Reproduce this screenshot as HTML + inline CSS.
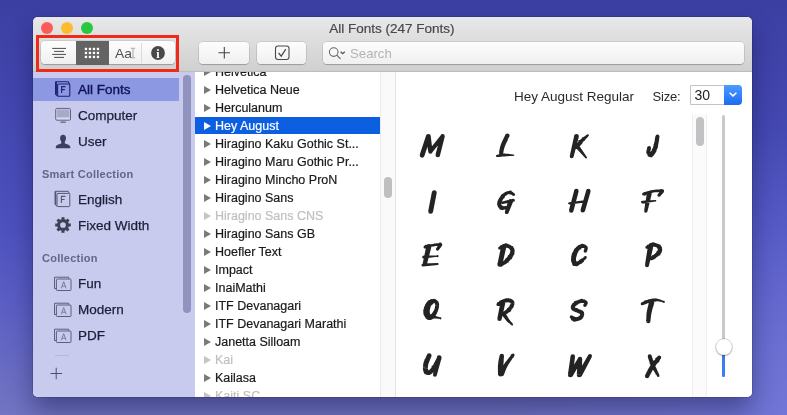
<!DOCTYPE html>
<html><head><meta charset="utf-8">
<style>
html,body{margin:0;padding:0;}
body{width:787px;height:415px;overflow:hidden;position:relative;font-family:"Liberation Sans",sans-serif;
background:radial-gradient(circle at 100% 100%,rgba(112,118,222,.75),rgba(112,118,222,0) 32%),linear-gradient(180deg,#3c3fa2 0%,#4448b1 30%,#4d51be 55%,#5a5dc3 72%,#7275c2 100%);}
#win{will-change:transform;position:absolute;left:33px;top:17px;width:719px;height:380px;border-radius:5px;overflow:hidden;background:#fff;}
#shadow{position:absolute;left:33px;top:17px;width:719px;height:380px;border-radius:5px;box-shadow:0 14px 26px rgba(12,12,60,.42),0 0 0 .5px rgba(0,0,0,.25);}
#tb{position:absolute;left:0;top:0;width:719px;height:54.5px;background:linear-gradient(#e8e8e8,#d0d0d0);border-bottom:1px solid #bcbcbc;box-sizing:border-box;z-index:3;}
.tl{position:absolute;top:5px;width:12px;height:12px;border-radius:50%;}
#title{position:absolute;left:-.7px;width:719px;top:4px;text-align:center;font-size:13.5px;color:#484848;-webkit-text-stroke:.2px #484848;}
.btn{position:absolute;top:25px;height:22px;background:linear-gradient(#fdfdfd,#f0f0f0);border-radius:4px;box-shadow:0 0 0 .5px rgba(0,0,0,.16),0 1px 1px rgba(0,0,0,.2);}
#side{position:absolute;left:0;top:54px;width:162px;height:326px;background:#c8cbed;}
.si{position:absolute;left:45px;font-size:13.5px;color:#1d1f3a;white-space:nowrap;-webkit-text-stroke:.25px #1d1f3a;}
.sh{position:absolute;left:9px;font-size:11px;font-weight:bold;color:#62658d;white-space:nowrap;letter-spacing:.25px;}
#list{position:absolute;left:162px;top:54px;width:185px;height:326px;background:#fff;}
.row{position:absolute;left:0;width:185px;height:18px;font-size:12.5px;line-height:18px;color:#1a1a1a;white-space:nowrap;}
.row span{position:absolute;left:20px;top:-.3px;-webkit-text-stroke:.2px currentColor;}
.row i{position:absolute;left:9px;top:4.700px;width:0;height:0;border-left:7.200px solid #7a7a7a;border-top:4.200px solid transparent;border-bottom:4.200px solid transparent;}
.row.dis{color:#c0c0c0;}
.row.dis i{border-left-color:#c4c4c4;}
.row.sel{background:#0c5fe1;color:#fff;height:17px;}
.row.sel i{border-left-color:#fff;}
#track{position:absolute;left:347px;top:54px;width:14px;height:326px;background:#fafafa;border-left:1px solid #e9e9e9;border-right:1px solid #e2e2e2;}
#prev{position:absolute;left:363px;top:54px;width:356px;height:326px;background:#fff;}
svg{will-change:transform;position:absolute;left:0;top:0;overflow:visible;z-index:5;}
</style></head><body>
<div id="shadow"></div>
<div id="win">
 <div id="tb">
  <div class="tl" style="left:8px;background:#fc5b57;"></div>
  <div class="tl" style="left:28px;background:#fdbc2e;"></div>
  <div class="tl" style="left:48px;background:#28c840;"></div>
  <div id="title">All Fonts (247 Fonts)</div>
  <div class="btn" style="left:8px;width:134px;top:24.300px;height:23.200px;"></div>
  <div style="position:absolute;left:43px;top:24.200px;width:33px;height:23.500px;background:#636363;"></div>
  <div style="position:absolute;left:108px;top:26px;width:1px;height:20px;background:#dadada;"></div>
  <div style="position:absolute;left:3.300px;top:18px;width:142.900px;height:36.800px;border:3.600px solid #ee2a1a;box-sizing:border-box;"></div>
  <div class="btn" style="left:166px;width:50px;"></div>
  <div class="btn" style="left:224px;width:49px;"></div>
  <div class="btn" style="left:290px;width:421px;"></div>
  <div style="position:absolute;left:317px;top:28.5px;font-size:13.200px;color:#b3b3b3;">Search</div>
 </div>
 <div id="side">
  <div style="position:absolute;left:0;top:6.600px;width:146px;height:23px;background:#8c98e2;"></div>
  <div class="si" style="top:11px;color:#12155a;-webkit-text-stroke:.4px #12155a;">All Fonts</div>
  <div class="si" style="top:37px;">Computer</div>
  <div class="si" style="top:63px;">User</div>
  <div class="sh" style="top:97px;">Smart Collection</div>
  <div class="si" style="top:121px;">English</div>
  <div class="si" style="top:147px;">Fixed Width</div>
  <div class="sh" style="top:181px;">Collection</div>
  <div class="si" style="top:205px;">Fun</div>
  <div class="si" style="top:231px;">Modern</div>
  <div class="si" style="top:257px;">PDF</div>
  <div style="position:absolute;left:150.3px;top:3.5px;width:7.4px;height:238px;border-radius:4px;background:#9193bf;"></div>
 </div>
 <div id="list">
  <div class="row" style="top:-8px;"><i></i><span>Helvetica</span></div>
  <div class="row" style="top:10px;"><i></i><span>Helvetica Neue</span></div>
  <div class="row" style="top:28px;"><i></i><span>Herculanum</span></div>
  <div class="row sel" style="top:46px;"><i></i><span>Hey August</span></div>
  <div class="row" style="top:64px;"><i></i><span>Hiragino Kaku Gothic St...</span></div>
  <div class="row" style="top:82px;"><i></i><span>Hiragino Maru Gothic Pr...</span></div>
  <div class="row" style="top:100px;"><i></i><span>Hiragino Mincho ProN</span></div>
  <div class="row" style="top:118px;"><i></i><span>Hiragino Sans</span></div>
  <div class="row dis" style="top:136px;"><i></i><span>Hiragino Sans CNS</span></div>
  <div class="row" style="top:154px;"><i></i><span>Hiragino Sans GB</span></div>
  <div class="row" style="top:172px;"><i></i><span>Hoefler Text</span></div>
  <div class="row" style="top:190px;"><i></i><span>Impact</span></div>
  <div class="row" style="top:208px;"><i></i><span>InaiMathi</span></div>
  <div class="row" style="top:226px;"><i></i><span>ITF Devanagari</span></div>
  <div class="row" style="top:244px;"><i></i><span>ITF Devanagari Marathi</span></div>
  <div class="row" style="top:262px;"><i></i><span>Janetta Silloam</span></div>
  <div class="row dis" style="top:280px;"><i></i><span>Kai</span></div>
  <div class="row" style="top:298px;"><i></i><span>Kailasa</span></div>
  <div class="row dis" style="top:316px;"><i></i><span>Kaiti SC</span></div>
 </div>
 <div id="track"><div style="position:absolute;left:3.200px;top:106px;width:7.800px;height:21px;border-radius:4px;background:#bfbfbf;"></div></div>
 <div id="prev">
  <div style="position:absolute;left:118px;top:18px;font-size:13.5px;color:#2a2a2a;white-space:nowrap;">Hey August Regular</div>
  <div style="position:absolute;left:256.500px;top:18.400px;font-size:13px;letter-spacing:-.2px;color:#2a2a2a;">Size:</div>
  <!-- combo -->
  <div style="position:absolute;left:294px;top:13.500px;width:52px;height:20.500px;box-sizing:border-box;border:1px solid #c4c4c4;border-radius:0 4px 4px 0;background:#fff;"></div>
  <div style="position:absolute;left:328px;top:13.500px;width:18px;height:20.500px;border-radius:0 4px 4px 0;background:linear-gradient(#4d9bff,#1a6cf2);"></div>
  <div style="position:absolute;left:298.500px;top:16px;font-size:14px;color:#222;">30</div>
  <!-- scroll track -->
  <div style="position:absolute;left:296px;top:43px;width:15px;height:283px;background:#fbfbfc;border-left:1px solid #efeff0;border-right:1px solid #efeff0;box-sizing:border-box;"></div>
  <div style="position:absolute;left:300px;top:46px;width:8px;height:29px;border-radius:4px;background:#c2c2c4;"></div>
  <!-- slider -->
  <div style="position:absolute;left:326px;top:44px;width:3px;height:262px;background:#c9c9cc;border-radius:1.5px;"></div>
  <div style="position:absolute;left:326px;top:283px;width:3px;height:23px;background:#3b7cf0;border-radius:1.5px;"></div>
  <div style="position:absolute;left:319.5px;top:267.5px;width:16px;height:16px;border-radius:50%;background:#fff;box-shadow:0 0 0 .5px rgba(0,0,0,.25),0 1px 2px rgba(0,0,0,.3);"></div>
 </div>
</div>
<!-- icons overlay, page coordinates -->
<svg width="787" height="415" viewBox="0 0 787 415" fill="none">
 <!-- list icon -->
 <g stroke="#4d4d4d" stroke-width="1">
  <path d="M52.200 48.400H66M54.100 51.400H64M52.200 54.400H66M54.100 57.400H64"/>
 </g>
 <!-- grid icon -->
 <g fill="#fff">
  <rect x="84.8" y="47.8" width="2.3" height="2.3"/><rect x="88.8" y="47.8" width="2.3" height="2.3"/><rect x="92.8" y="47.8" width="2.3" height="2.3"/><rect x="96.8" y="47.8" width="2.3" height="2.3"/>
  <rect x="84.8" y="51.8" width="2.3" height="2.3"/><rect x="88.8" y="51.8" width="2.3" height="2.3"/><rect x="92.8" y="51.8" width="2.3" height="2.3"/><rect x="96.8" y="51.8" width="2.3" height="2.3"/>
  <rect x="84.8" y="55.8" width="2.3" height="2.3"/><rect x="88.8" y="55.8" width="2.3" height="2.3"/><rect x="92.8" y="55.8" width="2.3" height="2.3"/><rect x="96.8" y="55.8" width="2.3" height="2.3"/>
 </g>
 <!-- AaI -->
 <text x="0" y="0" font-family="Liberation Sans" font-size="12.600" fill="#505050" transform="translate(115,57.800) scale(1.100,1)">Aa</text>
 <path d="M130.800 48.300H135.200M130.800 57.700H135.200M133 48.300V57.700" stroke="#aeaeae" stroke-width="1.100"/>
 <!-- info -->
 <circle cx="158" cy="53" r="6.900" fill="#484848"/>
 <text x="158" y="57.5" font-family="Liberation Serif" font-weight="bold" font-size="12" fill="#fff" text-anchor="middle">i</text>
 <!-- plus -->
 <path d="M218.5 52.7H230M224.3 47V58.5" stroke="#444" stroke-width="1.1"/>
 <!-- check -->
 <rect x="275.5" y="46" width="13.5" height="13.5" rx="2.5" stroke="#4a4a4a" stroke-width="1.1"/>
 <path d="M278.6 53l2.6 3.2l4.6-7" stroke="#4a4a4a" stroke-width="1.2"/>
 <!-- search -->
 <circle cx="333.700" cy="52.100" r="4.300" stroke="#666" stroke-width="1.100"/>
 <path d="M336.800 55.200l3.700 3.700" stroke="#666" stroke-width="1.200"/>
 <path d="M340.600 51.700l2.100 2l2.100-2" stroke="#555" stroke-width="1.300"/>
 <!-- combo chevron -->
 <path d="M729.6 99.2l3.4 3.2l3.4-3.2" stroke="#fff" stroke-width="1.5" transform="translate(0,-6.5)"/>

 <!-- glyphs -->
 <g fill="#232323">
  <path d="M419.7 155.3a2.4 2.4 0 1 0 4.8 0a2.4 2.4 0 1 0 -4.8 0zM424.4 156.1L430.7 137.1L426.1 135.5L419.8 154.5zM426 136.3a2.4 2.4 0 1 0 4.8 0a2.4 2.4 0 1 0 -4.8 0zM426.1 136.3a2.3 2.3 0 1 0 4.6 0a2.3 2.3 0 1 0 -4.6 0zM426.1 136.6L428.2 151.8L432.6 151.2L430.7 136zM428.2 151.5a2.2 2.2 0 1 0 4.4 0a2.2 2.2 0 1 0 -4.4 0zM428.3 151.5a2.1 2.1 0 1 0 4.2 0a2.1 2.1 0 1 0 -4.2 0zM432 152.8L444.2 137.4L441 135L428.8 150.2zM440.6 136.2a2 2 0 1 0 4 0a2 2 0 1 0 -4 0zM440.4 136.2a2.2 2.2 0 1 0 4.4 0a2.2 2.2 0 1 0 -4.4 0zM440.5 135.7L435.6 154.3L440 155.5L444.7 136.7zM435.5 154.9a2.3 2.3 0 1 0 4.6 0a2.3 2.3 0 1 0 -4.6 0z"/>
  <path d="M505.2 135.6a2.2 2.2 0 1 0 4.4 0a2.2 2.2 0 1 0 -4.4 0zM505.4 134.7L504.9 135.8L508.8 137.7L509.4 136.5zM504.7 136.7a2.2 2.2 0 1 0 4.4 0a2.2 2.2 0 1 0 -4.4 0zM504.9 135.8L504.1 137.4L508.1 139.3L508.8 137.7zM503.9 138.3a2.2 2.2 0 1 0 4.4 0a2.2 2.2 0 1 0 -4.4 0zM504.1 137.4L503.2 139.3L507.2 141.2L508.1 139.3zM502.9 140.2a2.2 2.2 0 1 0 4.4 0a2.2 2.2 0 1 0 -4.4 0zM503.2 139.3L502.2 141.3L506.2 143.2L507.2 141.2zM502 142.2a2.2 2.2 0 1 0 4.4 0a2.2 2.2 0 1 0 -4.4 0zM502.2 141.3L501.3 143.3L505.4 145.1L506.3 143.1zM501.2 144.2a2.2 2.2 0 1 0 4.4 0a2.2 2.2 0 1 0 -4.4 0zM501.3 143.4L500.6 145.1L504.8 146.7L505.4 145zM500.5 145.9a2.2 2.2 0 1 0 4.4 0a2.2 2.2 0 1 0 -4.4 0zM500.6 145.3L500.1 146.9L504.3 148.1L504.8 146.5zM500 147.5a2.2 2.2 0 1 0 4.4 0a2.2 2.2 0 1 0 -4.4 0zM500.1 147L499.7 148.6L503.9 149.6L504.3 148zM499.7 149.1a2.1 2.1 0 1 0 4.3 0a2.1 2.1 0 1 0 -4.3 0zM499.7 148.7L499.4 150.3L503.6 151.1L503.9 149.5zM499.4 150.7a2.1 2.1 0 1 0 4.2 0a2.1 2.1 0 1 0 -4.2 0zM499.4 150.3L499.2 151.8L503.3 152.5L503.6 151.1zM499.2 152.1a2.1 2.1 0 1 0 4.1 0a2.1 2.1 0 1 0 -4.1 0zM499.2 151.8L499.1 153L503.1 153.6L503.3 152.5zM499 153.3a2 2 0 1 0 4 0a2 2 0 1 0 -4 0zM499.1 153L498.9 153.8L502.9 154.6L503.1 153.7zM498.9 154.2a2 2 0 1 0 4 0a2 2 0 1 0 -4 0zM496 155.9a1.2 1.2 0 1 0 2.4 0a1.2 1.2 0 1 0 -2.4 0zM497.4 157.1L498.1 157L497.8 154.6L497 154.7zM496.7 155.8a1.2 1.2 0 1 0 2.5 0a1.2 1.2 0 1 0 -2.5 0zM498.2 157L499.2 156.9L498.8 154.4L497.8 154.6zM497.7 155.6a1.3 1.3 0 1 0 2.6 0a1.3 1.3 0 1 0 -2.6 0zM499.2 156.9L500.5 156.8L500.1 154.1L498.8 154.4zM498.9 155.4a1.3 1.3 0 1 0 2.7 0a1.3 1.3 0 1 0 -2.7 0zM500.5 156.8L501.8 156.6L501.5 153.9L500.1 154.1zM500.3 155.3a1.4 1.4 0 1 0 2.8 0a1.4 1.4 0 1 0 -2.8 0zM501.8 156.6L503.2 156.5L502.9 153.7L501.5 153.9zM501.7 155.1a1.4 1.4 0 1 0 2.8 0a1.4 1.4 0 1 0 -2.8 0zM503.2 156.5L504.6 156.4L504.4 153.6L503 153.7zM503.1 155a1.4 1.4 0 1 0 2.8 0a1.4 1.4 0 1 0 -2.8 0zM504.5 156.4L506.1 156.3L506 153.7L504.5 153.6zM504.7 155a1.3 1.3 0 1 0 2.6 0a1.3 1.3 0 1 0 -2.6 0zM506 156.3L507.8 156.2L507.8 153.8L506 153.7zM506.6 155a1.2 1.2 0 1 0 2.4 0a1.2 1.2 0 1 0 -2.4 0zM507.7 156.2L509.5 156.1L509.6 154L507.8 153.8zM508.5 155a1 1 0 1 0 2 0a1 1 0 1 0 -2 0zM509.5 156.1L511.2 156L511.3 154.3L509.6 154zM510.4 155.1a0.8 0.8 0 1 0 1.7 0a0.8 0.8 0 1 0 -1.7 0zM511.2 156L512.6 155.9L512.7 154.5L511.3 154.3zM512 155.2a0.7 0.7 0 1 0 1.4 0a0.7 0.7 0 1 0 -1.4 0zM512.7 155.9L513.7 155.8L513.7 154.6L512.7 154.5zM513.1 155.2a0.6 0.6 0 1 0 1.2 0a0.6 0.6 0 1 0 -1.2 0z"/>
  <path d="M574.1 136.3a2.4 2.4 0 1 0 4.8 0a2.4 2.4 0 1 0 -4.8 0zM574.2 135.7L569.8 155.7L573.6 156.7L578.8 136.9zM569.7 156.2a2 2 0 1 0 4 0a2 2 0 1 0 -4 0zM586.7 135.3a1.1 1.1 0 1 0 2.2 0a1.1 1.1 0 1 0 -2.2 0zM587.1 134.5L586.3 135.1L587.9 136.8L588.5 136.1zM585.9 136a1.2 1.2 0 1 0 2.4 0a1.2 1.2 0 1 0 -2.4 0zM586.3 135.1L585.2 135.9L586.9 137.9L587.9 136.9zM584.7 136.9a1.3 1.3 0 1 0 2.7 0a1.3 1.3 0 1 0 -2.7 0zM585.2 135.9L583.8 136.8L585.8 139.1L586.9 137.9zM583.3 137.9a1.5 1.5 0 1 0 3 0a1.5 1.5 0 1 0 -3 0zM583.8 136.8L582.4 137.9L584.7 140.3L585.8 139zM581.9 139.1a1.7 1.7 0 1 0 3.3 0a1.7 1.7 0 1 0 -3.3 0zM582.4 137.9L581.1 138.9L583.6 141.5L584.7 140.3zM580.5 140.2a1.8 1.8 0 1 0 3.6 0a1.8 1.8 0 1 0 -3.6 0zM581.1 139L579.9 140L582.7 142.6L583.6 141.5zM579.4 141.3a1.9 1.9 0 1 0 3.8 0a1.9 1.9 0 1 0 -3.8 0zM579.9 140.1L578.9 141.1L581.9 143.6L582.7 142.5zM578.4 142.3a2 2 0 1 0 3.9 0a2 2 0 1 0 -3.9 0zM578.9 141.1L578 142.2L581.1 144.7L581.9 143.6zM577.5 143.5a2 2 0 1 0 4 0a2 2 0 1 0 -4 0zM577.9 142.3L577.1 143.4L580.3 145.8L581.1 144.6zM576.7 144.6a2 2 0 1 0 4 0a2 2 0 1 0 -4 0zM577.1 143.4L576.3 144.4L579.6 146.8L580.3 145.7zM576 145.6a2 2 0 1 0 4 0a2 2 0 1 0 -4 0zM576.3 144.5L575.7 145.3L579 147.6L579.6 146.8zM575.4 146.5a2 2 0 1 0 4 0a2 2 0 1 0 -4 0zM575.7 145.3L575.3 145.9L578.5 148.3L579 147.6zM574.9 147.1a2 2 0 1 0 4 0a2 2 0 1 0 -4 0zM575.8 147.1a2 2 0 1 0 4 0a2 2 0 1 0 -4 0zM576.2 148.3L585.2 158.1L586.8 156.9L579.4 145.9zM585 157.5a1 1 0 1 0 2 0a1 1 0 1 0 -2 0z"/>
  <path d="M655.5 136.4a2 2 0 1 0 4 0a2 2 0 1 0 -4 0zM655.5 136.1L655.3 137.3L659.3 138L659.5 136.7zM655.3 137.7a2 2 0 1 0 4 0a2 2 0 1 0 -4 0zM655.3 137.3L655 139.1L659 139.8L659.3 138zM654.9 139.5a2.1 2.1 0 1 0 4.1 0a2.1 2.1 0 1 0 -4.1 0zM655 139.1L654.6 141.2L658.7 141.9L659 139.8zM654.5 141.6a2.1 2.1 0 1 0 4.2 0a2.1 2.1 0 1 0 -4.2 0zM654.6 141.2L654.1 143.4L658.3 144.2L658.7 142zM654.1 143.8a2.1 2.1 0 1 0 4.3 0a2.1 2.1 0 1 0 -4.3 0zM654.1 143.3L653.7 145.4L657.9 146.3L658.3 144.2zM653.6 145.9a2.2 2.2 0 1 0 4.3 0a2.2 2.2 0 1 0 -4.3 0zM653.7 145.3L653.2 147L657.4 148.2L657.9 146.4zM653.1 147.6a2.2 2.2 0 1 0 4.4 0a2.2 2.2 0 1 0 -4.4 0zM653.2 146.8L652.7 148.3L656.9 149.8L657.4 148.4zM652.5 149.1a2.2 2.2 0 1 0 4.5 0a2.2 2.2 0 1 0 -4.5 0zM652.7 148.2L652.1 149.5L656.2 151.3L656.8 150zM651.9 150.4a2.3 2.3 0 1 0 4.5 0a2.3 2.3 0 1 0 -4.5 0zM652.2 149.4L651.5 150.6L655.5 152.7L656.2 151.5zM651.2 151.7a2.3 2.3 0 1 0 4.6 0a2.3 2.3 0 1 0 -4.6 0zM651.6 150.5L650.9 151.6L654.8 154L655.4 152.9zM650.5 152.8a2.3 2.3 0 1 0 4.6 0a2.3 2.3 0 1 0 -4.6 0zM651 151.4L650.4 152.2L654 155L654.7 154.2zM649.9 153.6a2.3 2.3 0 1 0 4.6 0a2.3 2.3 0 1 0 -4.6 0zM650.6 152L650 152.5L653.2 155.9L653.8 155.3zM649.3 154.2a2.3 2.3 0 1 0 4.6 0a2.3 2.3 0 1 0 -4.6 0zM650.7 152.1L650.1 152.4L651.9 156.5L652.5 156.3zM648.7 154.5a2.3 2.3 0 1 0 4.5 0a2.3 2.3 0 1 0 -4.5 0zM651.1 152.2L650.5 152.2L650.3 156.6L650.9 156.7zM648.2 154.4a2.2 2.2 0 1 0 4.4 0a2.2 2.2 0 1 0 -4.4 0zM651.3 152.4L650.6 152.2L648.9 156.1L649.5 156.5zM647.6 154.2a2.2 2.2 0 1 0 4.3 0a2.2 2.2 0 1 0 -4.3 0zM651.1 152.4L650.5 152.1L648 155.4L648.5 155.9zM647.1 153.7a2.1 2.1 0 1 0 4.2 0a2.1 2.1 0 1 0 -4.2 0zM650.8 152.4L650.3 151.9L647.3 154.6L647.7 155.1zM646.8 153.2a2 2 0 1 0 4.1 0a2 2 0 1 0 -4.1 0zM650.6 152.2L650.2 151.7L646.8 153.7L647 154.2zM646.5 152.7a2 2 0 1 0 4 0a2 2 0 1 0 -4 0zM650.5 152.4L650.3 151.7L646.4 152.4L646.5 153zM646.4 152a2 2 0 1 0 3.9 0a2 2 0 1 0 -3.9 0zM650.4 152.2L650.4 151.3L646.5 151.1L646.4 151.9zM646.5 151.2a1.9 1.9 0 1 0 3.9 0a1.9 1.9 0 1 0 -3.9 0zM650.4 151.5L650.5 150.6L646.7 149.9L646.5 150.9zM646.7 150.3a1.9 1.9 0 1 0 3.9 0a1.9 1.9 0 1 0 -3.9 0zM650.5 150.7L650.7 149.7L646.9 148.9L646.7 149.8zM646.9 149.3a1.9 1.9 0 1 0 3.8 0a1.9 1.9 0 1 0 -3.8 0zM650.7 149.8L650.9 149L647.1 148.1L646.9 148.9zM647.1 148.5a1.9 1.9 0 1 0 3.8 0a1.9 1.9 0 1 0 -3.8 0zM650.9 148.9L651 148.4L647.2 147.6L647.1 148.2zM647.2 148a1.9 1.9 0 1 0 3.8 0a1.9 1.9 0 1 0 -3.8 0z"/>
  <path d="M431.9 192.6a2.4 2.4 0 1 0 4.8 0a2.4 2.4 0 1 0 -4.8 0zM431.9 192.1L428.2 210.9L433 211.9L436.7 193.1zM428.2 211.4a2.4 2.4 0 1 0 4.8 0a2.4 2.4 0 1 0 -4.8 0z"/>
  <path d="M512.3 194.6a1.4 1.4 0 1 0 2.8 0a1.4 1.4 0 1 0 -2.8 0zM514.5 193.4L514.1 193.1L512.5 195.5L512.9 195.8zM511.9 194.3a1.4 1.4 0 1 0 2.8 0a1.4 1.4 0 1 0 -2.8 0zM514.1 193.2L513.5 192.7L511.8 195L512.4 195.4zM511.3 193.8a1.4 1.4 0 1 0 2.8 0a1.4 1.4 0 1 0 -2.8 0zM513.5 192.7L512.8 192.2L511.1 194.5L511.8 195zM510.5 193.3a1.4 1.4 0 1 0 2.9 0a1.4 1.4 0 1 0 -2.9 0zM512.7 192.1L511.9 191.6L510.4 194.1L511.2 194.5zM509.7 192.8a1.4 1.4 0 1 0 2.9 0a1.4 1.4 0 1 0 -2.9 0zM511.7 191.5L510.9 191.1L509.8 193.9L510.6 194.2zM508.9 192.5a1.5 1.5 0 1 0 2.9 0a1.5 1.5 0 1 0 -2.9 0zM510.5 191L509.7 190.9L509.3 193.9L510.2 194zM508 192.4a1.5 1.5 0 1 0 3 0a1.5 1.5 0 1 0 -3 0zM509.3 190.9L508.4 191L508.8 194.1L509.7 193.9zM507.1 192.5a1.5 1.5 0 1 0 3.1 0a1.5 1.5 0 1 0 -3.1 0zM508.2 191.1L507.2 191.3L508.1 194.3L509 194zM506.1 192.8a1.6 1.6 0 1 0 3.2 0a1.6 1.6 0 1 0 -3.2 0zM507 191.3L506 191.7L507.2 194.7L508.2 194.3zM505 193.2a1.6 1.6 0 1 0 3.3 0a1.6 1.6 0 1 0 -3.3 0zM505.8 191.8L504.8 192.3L506.4 195.3L507.4 194.7zM503.9 193.8a1.7 1.7 0 1 0 3.4 0a1.7 1.7 0 1 0 -3.4 0zM504.6 192.4L503.6 193L505.6 195.9L506.6 195.2zM502.9 194.5a1.7 1.7 0 1 0 3.5 0a1.7 1.7 0 1 0 -3.5 0zM503.4 193.2L502.5 194L504.9 196.6L505.8 195.8zM501.9 195.3a1.8 1.8 0 1 0 3.6 0a1.8 1.8 0 1 0 -3.6 0zM502.3 194.1L501.4 195.1L504.2 197.6L505.1 196.5zM500.9 196.4a1.9 1.9 0 1 0 3.7 0a1.9 1.9 0 1 0 -3.7 0zM501.3 195.3L500.3 196.5L503.4 198.8L504.3 197.4zM499.9 197.6a1.9 1.9 0 1 0 3.8 0a1.9 1.9 0 1 0 -3.8 0zM500.2 196.6L499.3 198L502.6 200.1L503.5 198.7zM498.9 199.1a2 2 0 1 0 4 0a2 2 0 1 0 -4 0zM499.2 198.1L498.3 199.6L501.9 201.5L502.7 200zM498.1 200.5a2 2 0 1 0 4.1 0a2 2 0 1 0 -4.1 0zM498.3 199.7L497.6 201.1L501.4 202.8L502 201.4zM497.5 201.9a2.1 2.1 0 1 0 4.2 0a2.1 2.1 0 1 0 -4.2 0zM497.5 201.3L497.2 202.5L501.2 203.7L501.5 202.5zM497.1 203.1a2.1 2.1 0 1 0 4.2 0a2.1 2.1 0 1 0 -4.2 0zM497.1 203.1L497.1 204.1L501.3 204.2L501.3 203.1zM497.1 204.1a2.1 2.1 0 1 0 4.2 0a2.1 2.1 0 1 0 -4.2 0zM497.2 204.6L497.4 205.6L501.4 204.6L501.2 203.6zM497.4 205.1a2 2 0 1 0 4.1 0a2 2 0 1 0 -4.1 0zM497.6 206L498.1 206.9L501.6 205.2L501.3 204.2zM497.9 206a2 2 0 1 0 4 0a2 2 0 1 0 -4 0zM498.2 207.2L498.8 207.9L502 205.7L501.5 204.9zM498.5 206.8a1.9 1.9 0 1 0 3.8 0a1.9 1.9 0 1 0 -3.8 0zM499 208.1L499.7 208.7L502.3 206.2L501.8 205.5zM499.2 207.4a1.9 1.9 0 1 0 3.7 0a1.9 1.9 0 1 0 -3.7 0zM499.9 208.9L500.5 209.3L502.7 206.5L502.1 206zM499.8 207.9a1.8 1.8 0 1 0 3.6 0a1.8 1.8 0 1 0 -3.6 0zM501 209.6L501.7 209.8L502.8 206.5L502.2 206.2zM500.5 208.1a1.8 1.8 0 1 0 3.5 0a1.8 1.8 0 1 0 -3.5 0zM502.3 209.9L503.1 209.9L503.1 206.4L502.3 206.4zM501.4 208.1a1.7 1.7 0 1 0 3.4 0a1.7 1.7 0 1 0 -3.4 0zM503.3 209.8L504.2 209.7L503.7 206.3L502.8 206.4zM502.3 208a1.7 1.7 0 1 0 3.4 0a1.7 1.7 0 1 0 -3.4 0zM504.3 209.6L505.2 209.4L504.4 206.2L503.6 206.4zM503.1 207.8a1.6 1.6 0 1 0 3.3 0a1.6 1.6 0 1 0 -3.3 0zM505.2 209.4L505.9 209.2L505.1 206L504.4 206.2zM503.9 207.6a1.6 1.6 0 1 0 3.2 0a1.6 1.6 0 1 0 -3.2 0zM505.8 209.2L506.3 209.1L505.7 205.9L505.2 206zM504.4 207.5a1.6 1.6 0 1 0 3.2 0a1.6 1.6 0 1 0 -3.2 0zM501.3 202.7a1.2 1.2 0 1 0 2.4 0a1.2 1.2 0 1 0 -2.4 0zM502.8 203.9L513.7 201.8L513.1 198.8L502.2 201.5zM511.9 200.3a1.5 1.5 0 1 0 3 0a1.5 1.5 0 1 0 -3 0zM508.2 201.5a2.4 2.4 0 1 0 4.8 0a2.4 2.4 0 1 0 -4.8 0zM508.3 200.7L504.9 211.5L508.5 212.9L512.9 202.3zM504.8 212.2a1.9 1.9 0 1 0 3.8 0a1.9 1.9 0 1 0 -3.8 0z"/>
  <path d="M574.1 191a2.2 2.2 0 1 0 4.5 0a2.2 2.2 0 1 0 -4.5 0zM574.2 190.4L569 210L573.4 211.2L578.6 191.6zM569 210.6a2.2 2.2 0 1 0 4.5 0a2.2 2.2 0 1 0 -4.5 0zM586.1 191a2.2 2.2 0 1 0 4.5 0a2.2 2.2 0 1 0 -4.5 0zM586.2 190.4L580.6 209.7L585 210.9L590.6 191.6zM580.5 210.3a2.2 2.2 0 1 0 4.5 0a2.2 2.2 0 1 0 -4.5 0zM568.1 203.3a1.1 1.1 0 1 0 2.2 0a1.1 1.1 0 1 0 -2.2 0zM569.3 204.4L586.8 202.3L586.6 200.1L569.1 202.2zM585.6 201.2a1.1 1.1 0 1 0 2.2 0a1.1 1.1 0 1 0 -2.2 0z"/>
  <path d="M646.9 193.5a2.4 2.4 0 1 0 4.8 0a2.4 2.4 0 1 0 -4.8 0zM646.9 193L644.1 210.7L647.5 211.3L651.7 194zM644.1 211a1.7 1.7 0 1 0 3.4 0a1.7 1.7 0 1 0 -3.4 0zM642.1 194.1a1.5 1.5 0 1 0 3 0a1.5 1.5 0 1 0 -3 0zM644.1 195.5L645.1 195.2L644.2 192.4L643.1 192.7zM643.2 193.8a1.5 1.5 0 1 0 2.9 0a1.5 1.5 0 1 0 -2.9 0zM645.1 195.1L646.5 194.6L645.6 191.9L644.1 192.4zM644.6 193.3a1.4 1.4 0 1 0 2.9 0a1.4 1.4 0 1 0 -2.9 0zM646.5 194.6L648.2 194L647.3 191.4L645.6 191.9zM646.4 192.7a1.4 1.4 0 1 0 2.8 0a1.4 1.4 0 1 0 -2.8 0zM648.2 194L650 193.4L649.2 190.8L647.3 191.4zM648.2 192.1a1.3 1.3 0 1 0 2.7 0a1.3 1.3 0 1 0 -2.7 0zM649.9 193.4L651.8 192.8L651 190.3L649.2 190.8zM650.1 191.6a1.3 1.3 0 1 0 2.6 0a1.3 1.3 0 1 0 -2.6 0zM651.7 192.9L653.4 192.5L652.8 189.9L651.1 190.3zM651.8 191.2a1.3 1.3 0 1 0 2.6 0a1.3 1.3 0 1 0 -2.6 0zM653.3 192.5L655 192.3L654.6 189.7L652.9 189.9zM653.5 191a1.3 1.3 0 1 0 2.6 0a1.3 1.3 0 1 0 -2.6 0zM654.9 192.3L656.7 192.2L656.5 189.5L654.7 189.7zM655.3 190.9a1.3 1.3 0 1 0 2.7 0a1.3 1.3 0 1 0 -2.7 0zM656.7 192.2L658.5 192.2L658.4 189.4L656.6 189.5zM657.1 190.8a1.4 1.4 0 1 0 2.8 0a1.4 1.4 0 1 0 -2.8 0zM658.5 192.2L660.1 192.2L660.1 189.4L658.4 189.4zM658.7 190.8a1.4 1.4 0 1 0 2.9 0a1.4 1.4 0 1 0 -2.9 0zM660.1 192.2L661.6 192.3L661.6 189.3L660.1 189.4zM660.1 190.8a1.5 1.5 0 1 0 2.9 0a1.5 1.5 0 1 0 -2.9 0zM661.6 192.3L662.6 192.3L662.6 189.3L661.5 189.3zM661.1 190.8a1.5 1.5 0 1 0 3 0a1.5 1.5 0 1 0 -3 0zM660.6 191.4a1.7 1.7 0 1 0 3.4 0a1.7 1.7 0 1 0 -3.4 0zM661 190.3L657.8 194.2L660.2 196.2L663.6 192.5zM657.4 195.2a1.6 1.6 0 1 0 3.2 0a1.6 1.6 0 1 0 -3.2 0zM641 202.1a1.3 1.3 0 1 0 2.6 0a1.3 1.3 0 1 0 -2.6 0zM642.4 203.4L655.7 201.5L655.5 200.1L642.2 200.8zM654.9 200.8a0.7 0.7 0 1 0 1.4 0a0.7 0.7 0 1 0 -1.4 0z"/>
  <path d="M426.2 246.6a2.6 2.6 0 1 0 5.2 0a2.6 2.6 0 1 0 -5.2 0zM426.3 246L422.8 263.1L427 264.1L431.3 247.2zM422.7 263.6a2.2 2.2 0 1 0 4.4 0a2.2 2.2 0 1 0 -4.4 0zM423.5 246.9a1.5 1.5 0 1 0 3 0a1.5 1.5 0 1 0 -3 0zM425.3 248.4L426.4 248.1L425.7 245.2L424.7 245.4zM424.6 246.7a1.5 1.5 0 1 0 2.9 0a1.5 1.5 0 1 0 -2.9 0zM426.4 248.1L427.9 247.7L427.2 244.9L425.7 245.2zM426.1 246.3a1.4 1.4 0 1 0 2.9 0a1.4 1.4 0 1 0 -2.9 0zM427.9 247.7L429.6 247.3L429 244.6L427.2 244.9zM427.9 245.9a1.4 1.4 0 1 0 2.8 0a1.4 1.4 0 1 0 -2.8 0zM429.6 247.3L431.4 246.8L430.9 244.2L429 244.6zM429.8 245.5a1.3 1.3 0 1 0 2.7 0a1.3 1.3 0 1 0 -2.7 0zM431.4 246.8L433.2 246.4L432.6 243.9L430.9 244.2zM431.6 245.2a1.3 1.3 0 1 0 2.6 0a1.3 1.3 0 1 0 -2.6 0zM433.1 246.5L434.6 246.2L434.2 243.6L432.7 243.9zM433.1 244.9a1.3 1.3 0 1 0 2.6 0a1.3 1.3 0 1 0 -2.6 0zM434.6 246.2L435.9 246L435.6 243.4L434.2 243.6zM434.4 244.7a1.3 1.3 0 1 0 2.6 0a1.3 1.3 0 1 0 -2.6 0zM435.8 246L437.1 246L436.9 243.3L435.6 243.4zM435.6 244.6a1.3 1.3 0 1 0 2.7 0a1.3 1.3 0 1 0 -2.7 0zM437.1 246L438.3 246L438.1 243.2L436.9 243.3zM436.8 244.6a1.4 1.4 0 1 0 2.8 0a1.4 1.4 0 1 0 -2.8 0zM438.2 246L439.3 246L439.2 243.1L438.1 243.2zM437.8 244.5a1.4 1.4 0 1 0 2.9 0a1.4 1.4 0 1 0 -2.9 0zM439.3 246L440.2 246L440.1 243.1L439.2 243.1zM438.7 244.5a1.5 1.5 0 1 0 2.9 0a1.5 1.5 0 1 0 -2.9 0zM440.2 246L440.9 246L440.7 243L440.1 243.1zM439.3 244.5a1.5 1.5 0 1 0 3 0a1.5 1.5 0 1 0 -3 0zM438.8 245a1.7 1.7 0 1 0 3.4 0a1.7 1.7 0 1 0 -3.4 0zM439.1 244L436.2 248.2L438.8 250L441.9 246zM435.9 249.1a1.6 1.6 0 1 0 3.2 0a1.6 1.6 0 1 0 -3.2 0zM422.2 257a1.5 1.5 0 1 0 3 0a1.5 1.5 0 1 0 -3 0zM423.8 258.5L437.6 256.8L437.6 255.4L423.6 255.5zM436.9 256.1a0.8 0.8 0 1 0 1.5 0a0.8 0.8 0 1 0 -1.5 0zM421.5 264.9a1.5 1.5 0 1 0 3 0a1.5 1.5 0 1 0 -3 0zM423.1 266.4L437.7 265.1L437.5 263.1L422.9 263.4zM436.6 264.1a1 1 0 1 0 2 0a1 1 0 1 0 -2 0z"/>
  <path d="M500.8 248.2a2.6 2.6 0 1 0 5.2 0a2.6 2.6 0 1 0 -5.2 0zM500.9 247.6L497.5 263.7L502.3 264.7L505.9 248.8zM497.4 264.2a2.5 2.5 0 1 0 5 0a2.5 2.5 0 1 0 -5 0zM498.1 248.1a1.5 1.5 0 1 0 3 0a1.5 1.5 0 1 0 -3 0zM500.3 249.4L501 249.1L499.6 246.4L498.9 246.8zM498.8 247.7a1.5 1.5 0 1 0 3.1 0a1.5 1.5 0 1 0 -3.1 0zM501 249.1L502 248.6L500.5 245.8L499.6 246.4zM499.7 247.2a1.6 1.6 0 1 0 3.1 0a1.6 1.6 0 1 0 -3.1 0zM502 248.6L503.2 248L501.7 245.2L500.5 245.8zM500.8 246.6a1.6 1.6 0 1 0 3.2 0a1.6 1.6 0 1 0 -3.2 0zM503.1 248L504.3 247.5L503 244.5L501.7 245.1zM502 246a1.7 1.7 0 1 0 3.3 0a1.7 1.7 0 1 0 -3.3 0zM504.2 247.6L505.4 247.2L504.3 244L503.1 244.4zM503.2 245.6a1.7 1.7 0 1 0 3.4 0a1.7 1.7 0 1 0 -3.4 0zM505 247.3L506.2 247.2L505.8 243.8L504.7 243.9zM504.2 245.5a1.8 1.8 0 1 0 3.5 0a1.8 1.8 0 1 0 -3.5 0zM505.7 247.2L506.8 247.5L507.4 243.9L506.3 243.8zM505.3 245.7a1.8 1.8 0 1 0 3.6 0a1.8 1.8 0 1 0 -3.6 0zM506.5 247.4L507.7 247.9L508.9 244.4L507.7 244zM506.5 246.1a1.8 1.8 0 1 0 3.7 0a1.8 1.8 0 1 0 -3.7 0zM507.5 247.8L508.7 248.4L510.3 245L509.1 244.5zM507.6 246.7a1.9 1.9 0 1 0 3.8 0a1.9 1.9 0 1 0 -3.8 0zM508.5 248.3L509.5 249L511.6 245.8L510.5 245.1zM508.7 247.4a1.9 1.9 0 1 0 3.8 0a1.9 1.9 0 1 0 -3.8 0zM509.3 248.9L510.2 249.7L512.8 246.7L511.8 246zM509.5 248.2a2 2 0 1 0 3.9 0a2 2 0 1 0 -3.9 0zM509.9 249.4L510.5 250.2L513.7 247.8L513 247zM510.1 249a2 2 0 1 0 4 0a2 2 0 1 0 -4 0zM510.2 249.7L510.5 250.6L514.3 249.1L514 248.3zM510.4 249.8a2 2 0 1 0 4.1 0a2 2 0 1 0 -4.1 0zM510.4 250.1L510.5 251L514.6 250.5L514.5 249.6zM510.5 250.8a2.1 2.1 0 1 0 4.2 0a2.1 2.1 0 1 0 -4.2 0zM510.5 250.6L510.3 251.6L514.6 251.9L514.6 250.9zM510.3 251.8a2.1 2.1 0 1 0 4.3 0a2.1 2.1 0 1 0 -4.3 0zM510.4 251.3L510.1 252.3L514.3 253.3L514.5 252.2zM510.1 252.8a2.2 2.2 0 1 0 4.3 0a2.2 2.2 0 1 0 -4.3 0zM510.2 252.1L509.8 253.1L513.9 254.6L514.3 253.5zM509.7 253.9a2.2 2.2 0 1 0 4.4 0a2.2 2.2 0 1 0 -4.4 0zM509.9 253L509.4 254L513.4 255.8L513.9 254.7zM509.2 254.9a2.2 2.2 0 1 0 4.4 0a2.2 2.2 0 1 0 -4.4 0zM509.5 253.8L508.9 254.9L512.7 257.1L513.3 256zM508.6 256a2.2 2.2 0 1 0 4.4 0a2.2 2.2 0 1 0 -4.4 0zM509 254.7L508.2 255.9L511.7 258.4L512.6 257.3zM507.8 257.1a2.2 2.2 0 1 0 4.3 0a2.2 2.2 0 1 0 -4.3 0zM508.3 255.7L507.3 256.9L510.7 259.6L511.6 258.5zM506.9 258.3a2.1 2.1 0 1 0 4.3 0a2.1 2.1 0 1 0 -4.3 0zM507.4 256.8L506.4 258L509.6 260.8L510.6 259.7zM505.9 259.4a2.1 2.1 0 1 0 4.2 0a2.1 2.1 0 1 0 -4.2 0zM506.5 257.9L505.5 259L508.4 261.9L509.5 260.9zM504.9 260.5a2.1 2.1 0 1 0 4.1 0a2.1 2.1 0 1 0 -4.1 0zM505.5 259L504.6 260L507.4 262.8L508.4 261.9zM504 261.4a2 2 0 1 0 4 0a2 2 0 1 0 -4 0zM504.7 259.9L503.8 260.8L506.3 263.7L507.3 262.9zM503.1 262.2a1.9 1.9 0 1 0 3.9 0a1.9 1.9 0 1 0 -3.9 0zM503.9 260.7L502.9 261.5L505 264.5L506.1 263.8zM502.1 263a1.8 1.8 0 1 0 3.7 0a1.8 1.8 0 1 0 -3.7 0zM502.9 261.5L501.9 262.2L503.8 265.2L504.9 264.5zM501.1 263.7a1.7 1.7 0 1 0 3.5 0a1.7 1.7 0 1 0 -3.5 0zM502 262.2L501 262.9L502.7 265.7L503.8 265.2zM500.2 264.3a1.6 1.6 0 1 0 3.3 0a1.6 1.6 0 1 0 -3.3 0zM501 262.9L500.2 263.5L501.8 266.2L502.7 265.7zM499.5 264.8a1.6 1.6 0 1 0 3.1 0a1.6 1.6 0 1 0 -3.1 0zM500.2 263.5L499.6 263.9L501.2 266.5L501.8 266.1zM498.9 265.2a1.5 1.5 0 1 0 3 0a1.5 1.5 0 1 0 -3 0z"/>
  <path d="M583.6 251.1a1.7 1.7 0 1 0 3.4 0a1.7 1.7 0 1 0 -3.4 0zM586.9 251.6L587.1 251.2L583.8 250.2L583.7 250.6zM583.7 250.7a1.7 1.7 0 1 0 3.4 0a1.7 1.7 0 1 0 -3.4 0zM587 251.3L587.2 250.7L584.1 249.5L583.8 250.1zM584 250.1a1.7 1.7 0 1 0 3.4 0a1.7 1.7 0 1 0 -3.4 0zM587.3 250.6L587.5 250L584.3 248.8L584 249.5zM584.2 249.4a1.7 1.7 0 1 0 3.4 0a1.7 1.7 0 1 0 -3.4 0zM587.5 249.8L587.7 249.1L584.4 248.3L584.2 249zM584.4 248.7a1.7 1.7 0 1 0 3.4 0a1.7 1.7 0 1 0 -3.4 0zM587.8 248.8L587.8 248.2L584.4 247.9L584.4 248.5zM584.4 248a1.7 1.7 0 1 0 3.4 0a1.7 1.7 0 1 0 -3.4 0zM587.8 247.6L587.6 247.1L584.4 247.9L584.5 248.4zM584.3 247.5a1.7 1.7 0 1 0 3.4 0a1.7 1.7 0 1 0 -3.4 0zM587.3 246.4L587 246L584.3 248.1L584.7 248.6zM583.9 247.1a1.7 1.7 0 1 0 3.4 0a1.7 1.7 0 1 0 -3.4 0zM586.7 245.7L586.2 245.3L584 247.9L584.6 248.4zM583.4 246.6a1.7 1.7 0 1 0 3.4 0a1.7 1.7 0 1 0 -3.4 0zM586 245.2L585.3 244.8L583.6 247.7L584.3 248.1zM582.8 246.2a1.7 1.7 0 1 0 3.4 0a1.7 1.7 0 1 0 -3.4 0zM585.1 244.7L584.3 244.4L583.1 247.6L583.9 247.8zM582 246a1.7 1.7 0 1 0 3.4 0a1.7 1.7 0 1 0 -3.4 0zM584 244.3L583.3 244.1L582.7 247.5L583.5 247.6zM581.3 245.8a1.7 1.7 0 1 0 3.4 0a1.7 1.7 0 1 0 -3.4 0zM582.8 244.1L582.1 244.2L582.3 247.6L583.1 247.5zM580.5 245.9a1.8 1.8 0 1 0 3.5 0a1.8 1.8 0 1 0 -3.5 0zM581.7 244.2L580.8 244.4L581.9 247.9L582.7 247.6zM579.6 246.2a1.8 1.8 0 1 0 3.6 0a1.8 1.8 0 1 0 -3.6 0zM580.6 244.5L579.7 244.9L581.3 248.3L582.1 247.8zM578.6 246.6a1.9 1.9 0 1 0 3.8 0a1.9 1.9 0 1 0 -3.8 0zM579.5 245L578.5 245.5L580.5 248.8L581.4 248.2zM577.6 247.2a2 2 0 1 0 3.9 0a2 2 0 1 0 -3.9 0zM578.4 245.6L577.4 246.2L579.8 249.5L580.7 248.7zM576.5 247.9a2 2 0 1 0 4.1 0a2 2 0 1 0 -4.1 0zM577.2 246.3L576.2 247.1L579.1 250.2L580 249.4zM575.6 248.7a2.1 2.1 0 1 0 4.3 0a2.1 2.1 0 1 0 -4.3 0zM576.1 247.3L575.2 248.2L578.6 251L579.3 250zM574.7 249.6a2.2 2.2 0 1 0 4.4 0a2.2 2.2 0 1 0 -4.4 0zM575.1 248.4L574.3 249.5L578.1 251.9L578.7 250.8zM573.9 250.7a2.3 2.3 0 1 0 4.5 0a2.3 2.3 0 1 0 -4.5 0zM574.2 249.6L573.4 250.9L577.5 253.1L578.2 251.8zM573.1 252a2.3 2.3 0 1 0 4.7 0a2.3 2.3 0 1 0 -4.7 0zM573.4 251.1L572.6 252.5L577 254.4L577.6 253zM572.4 253.4a2.4 2.4 0 1 0 4.8 0a2.4 2.4 0 1 0 -4.8 0zM572.6 252.6L572 254L576.6 255.8L577.1 254.3zM571.8 254.9a2.5 2.5 0 1 0 4.9 0a2.5 2.5 0 1 0 -4.9 0zM571.9 254.2L571.5 255.6L576.2 257L576.6 255.6zM571.4 256.3a2.5 2.5 0 1 0 5 0a2.5 2.5 0 1 0 -5 0zM571.4 255.8L571.1 257.1L576.1 258.1L576.3 256.8zM571.1 257.6a2.5 2.5 0 1 0 5 0a2.5 2.5 0 1 0 -5 0zM571.1 257.4L571 258.7L576 259L576.1 257.8zM571 258.8a2.5 2.5 0 1 0 5 0a2.5 2.5 0 1 0 -5 0zM571 258.9L571.1 260.2L576 260L576 258.7zM571.1 260.1a2.5 2.5 0 1 0 4.9 0a2.5 2.5 0 1 0 -4.9 0zM571.1 260.5L571.4 261.7L576.1 261L576 259.7zM571.4 261.3a2.4 2.4 0 1 0 4.8 0a2.4 2.4 0 1 0 -4.8 0zM571.4 262L571.8 263L576.3 261.8L576.1 260.7zM571.7 262.4a2.3 2.3 0 1 0 4.7 0a2.3 2.3 0 1 0 -4.7 0zM572 263.4L572.4 264.3L576.5 262.3L576.2 261.4zM572.2 263.3a2.3 2.3 0 1 0 4.5 0a2.3 2.3 0 1 0 -4.5 0zM572.9 264.8L573.4 265.3L576.6 262.3L576.1 261.7zM572.8 263.8a2.2 2.2 0 1 0 4.4 0a2.2 2.2 0 1 0 -4.4 0zM574.5 265.9L575.2 266L576.2 261.9L575.5 261.7zM573.5 264a2.1 2.1 0 1 0 4.3 0a2.1 2.1 0 1 0 -4.3 0zM576 266.1L576.9 265.9L576.2 261.8L575.3 261.9zM574.5 263.8a2.1 2.1 0 1 0 4.1 0a2.1 2.1 0 1 0 -4.1 0zM577.3 265.8L578.2 265.3L576.8 261.6L575.8 261.9zM575.5 263.5a2 2 0 1 0 4 0a2 2 0 1 0 -4 0zM578.4 265.2L579.4 264.7L577.7 261.2L576.6 261.7zM576.6 263a1.9 1.9 0 1 0 3.8 0a1.9 1.9 0 1 0 -3.8 0zM579.5 264.6L580.5 264L578.6 260.8L577.6 261.3zM577.7 262.4a1.8 1.8 0 1 0 3.7 0a1.8 1.8 0 1 0 -3.7 0zM580.5 263.9L581.4 263.3L579.6 260.3L578.6 260.8zM578.8 261.8a1.8 1.8 0 1 0 3.5 0a1.8 1.8 0 1 0 -3.5 0zM581.5 263.2L582.4 262.5L580.5 259.8L579.5 260.4zM579.8 261.1a1.7 1.7 0 1 0 3.3 0a1.7 1.7 0 1 0 -3.3 0zM582.5 262.4L583.4 261.5L581.4 259.1L580.4 259.9zM580.9 260.3a1.6 1.6 0 1 0 3.1 0a1.6 1.6 0 1 0 -3.1 0zM583.5 261.5L584.4 260.5L582.4 258.4L581.4 259.2zM581.9 259.4a1.4 1.4 0 1 0 2.9 0a1.4 1.4 0 1 0 -2.9 0zM584.4 260.5L585.2 259.5L583.4 257.6L582.4 258.4zM582.9 258.6a1.3 1.3 0 1 0 2.7 0a1.3 1.3 0 1 0 -2.7 0zM585.2 259.5L585.9 258.7L584.2 256.9L583.4 257.6zM583.8 257.8a1.3 1.3 0 1 0 2.5 0a1.3 1.3 0 1 0 -2.5 0zM585.9 258.7L586.4 258.2L584.8 256.4L584.2 256.9zM584.4 257.3a1.2 1.2 0 1 0 2.4 0a1.2 1.2 0 1 0 -2.4 0z"/>
  <path d="M647.8 247.4a2.6 2.6 0 1 0 5.2 0a2.6 2.6 0 1 0 -5.2 0zM647.8 246.9L645 264.8L649 265.6L653 247.9zM645 265.2a2 2 0 1 0 4 0a2 2 0 1 0 -4 0zM645.3 247.3a1.5 1.5 0 1 0 3 0a1.5 1.5 0 1 0 -3 0zM647.5 248.6L648.2 248.3L646.8 245.6L646.1 246zM646 246.9a1.5 1.5 0 1 0 3.1 0a1.5 1.5 0 1 0 -3.1 0zM648.3 248.2L649.2 247.7L647.6 245L646.7 245.6zM646.9 246.4a1.6 1.6 0 1 0 3.1 0a1.6 1.6 0 1 0 -3.1 0zM649.2 247.7L650.3 247.1L648.8 244.3L647.7 245zM647.9 245.7a1.6 1.6 0 1 0 3.2 0a1.6 1.6 0 1 0 -3.2 0zM650.3 247.2L651.5 246.6L650 243.6L648.8 244.3zM649.1 245.1a1.7 1.7 0 1 0 3.3 0a1.7 1.7 0 1 0 -3.3 0zM651.3 246.7L652.6 246.3L651.4 243.1L650.2 243.6zM650.3 244.7a1.7 1.7 0 1 0 3.4 0a1.7 1.7 0 1 0 -3.4 0zM652.2 246.4L653.4 246.2L652.8 242.8L651.7 243zM651.4 244.5a1.8 1.8 0 1 0 3.5 0a1.8 1.8 0 1 0 -3.5 0zM652.9 246.2L654.1 246.4L654.4 242.8L653.3 242.8zM652.4 244.6a1.8 1.8 0 1 0 3.6 0a1.8 1.8 0 1 0 -3.6 0zM653.8 246.4L655 246.7L655.9 243.2L654.7 242.9zM653.6 244.9a1.8 1.8 0 1 0 3.7 0a1.8 1.8 0 1 0 -3.7 0zM654.8 246.7L656 247.2L657.4 243.7L656.1 243.2zM654.8 245.4a1.9 1.9 0 1 0 3.8 0a1.9 1.9 0 1 0 -3.8 0zM655.9 247.1L657 247.7L658.7 244.3L657.6 243.7zM655.9 246a1.9 1.9 0 1 0 3.8 0a1.9 1.9 0 1 0 -3.8 0zM656.8 247.6L657.7 248.3L659.9 245L658.9 244.4zM656.9 246.6a2 2 0 1 0 3.9 0a2 2 0 1 0 -3.9 0zM657.5 248.1L658.1 248.7L660.9 245.9L660.2 245.2zM657.5 247.3a2 2 0 1 0 4 0a2 2 0 1 0 -4 0zM657.8 248.3L658.1 249L661.7 247L661.2 246.3zM657.9 248a2 2 0 1 0 4.1 0a2 2 0 1 0 -4.1 0zM657.9 248.5L658 249.3L662.1 248.3L661.9 247.5zM658 248.8a2.1 2.1 0 1 0 4.2 0a2.1 2.1 0 1 0 -4.2 0zM658 248.8L657.9 249.6L662.2 249.6L662.2 248.8zM657.9 249.6a2.1 2.1 0 1 0 4.3 0a2.1 2.1 0 1 0 -4.3 0zM658 249.2L657.8 250.1L662.1 250.9L662.2 250zM657.7 250.5a2.2 2.2 0 1 0 4.4 0a2.2 2.2 0 1 0 -4.4 0zM657.8 249.8L657.5 250.6L661.7 252.1L662 251.2zM657.4 251.4a2.2 2.2 0 1 0 4.4 0a2.2 2.2 0 1 0 -4.4 0zM657.6 250.4L657.2 251.2L661.2 253.2L661.6 252.3zM657 252.2a2.2 2.2 0 1 0 4.4 0a2.2 2.2 0 1 0 -4.4 0zM657.4 250.9L656.9 251.8L660.3 254.3L661 253.5zM656.4 253a2.2 2.2 0 1 0 4.3 0a2.2 2.2 0 1 0 -4.3 0zM657 251.5L656.3 252.4L659.3 255.3L660.2 254.5zM655.7 253.9a2.1 2.1 0 1 0 4.2 0a2.1 2.1 0 1 0 -4.2 0zM656.4 252.3L655.5 253.2L658.2 256.2L659.2 255.4zM654.8 254.7a2 2 0 1 0 4 0a2 2 0 1 0 -4 0zM655.6 253.1L654.6 254L657 257L658.1 256.3zM653.9 255.5a1.9 1.9 0 1 0 3.9 0a1.9 1.9 0 1 0 -3.9 0zM654.6 254L653.7 254.8L656 257.7L657 257.1zM653 256.3a1.8 1.8 0 1 0 3.7 0a1.8 1.8 0 1 0 -3.7 0zM653.7 254.8L652.9 255.5L655.1 258.3L655.9 257.7zM652.2 256.9a1.8 1.8 0 1 0 3.5 0a1.8 1.8 0 1 0 -3.5 0zM653 255.5L652.3 256.1L654.2 258.8L655 258.3zM651.6 257.4a1.7 1.7 0 1 0 3.3 0a1.7 1.7 0 1 0 -3.3 0zM652.4 256L651.7 256.6L653.3 259.2L654.1 258.9zM650.9 257.9a1.6 1.6 0 1 0 3.1 0a1.6 1.6 0 1 0 -3.1 0zM651.7 256.5L651.1 257L652.5 259.6L653.2 259.3zM650.3 258.3a1.5 1.5 0 1 0 2.9 0a1.5 1.5 0 1 0 -2.9 0zM651.1 257L650.5 257.4L651.8 259.9L652.4 259.6zM649.8 258.6a1.4 1.4 0 1 0 2.8 0a1.4 1.4 0 1 0 -2.8 0zM650.5 257.4L650 257.7L651.2 260.1L651.7 259.9zM649.3 258.9a1.3 1.3 0 1 0 2.6 0a1.3 1.3 0 1 0 -2.6 0zM650 257.7L649.6 258L650.8 260.2L651.2 260zM649 259.1a1.2 1.2 0 1 0 2.5 0a1.2 1.2 0 1 0 -2.5 0z"/>
  <path d="M432.1 300.6a1.9 1.9 0 1 0 3.8 0a1.9 1.9 0 1 0 -3.8 0zM433.1 298.9L432.5 299.2L434.4 302.7L434.9 302.3zM431.4 300.9a2 2 0 1 0 4 0a2 2 0 1 0 -4 0zM432.5 299.1L431.7 299.4L433.5 303.2L434.3 302.7zM430.5 301.3a2.1 2.1 0 1 0 4.2 0a2.1 2.1 0 1 0 -4.2 0zM431.6 299.4L430.6 299.8L432.6 303.8L433.5 303.2zM429.3 301.8a2.3 2.3 0 1 0 4.5 0a2.3 2.3 0 1 0 -4.5 0zM430.4 299.9L429.3 300.3L431.8 304.5L432.8 303.8zM428.2 302.4a2.4 2.4 0 1 0 4.9 0a2.4 2.4 0 1 0 -4.9 0zM429.1 300.5L428.1 301.1L431.2 305.2L432.1 304.4zM427.1 303.2a2.6 2.6 0 1 0 5.1 0a2.6 2.6 0 1 0 -5.1 0zM427.7 301.4L426.9 302.2L430.9 305.8L431.6 304.9zM426.2 304a2.7 2.7 0 1 0 5.4 0a2.7 2.7 0 1 0 -5.4 0zM426.6 302.6L425.9 303.6L430.7 306.5L431.2 305.4zM425.5 305a2.8 2.8 0 1 0 5.6 0a2.8 2.8 0 1 0 -5.6 0zM425.7 303.9L425.1 305.1L430.4 307.5L430.8 306.2zM424.8 306.3a2.9 2.9 0 1 0 5.9 0a2.9 2.9 0 1 0 -5.9 0zM425 305.3L424.4 306.6L430.1 308.7L430.5 307.3zM424.2 307.7a3 3 0 1 0 6.1 0a3 3 0 1 0 -6.1 0zM424.3 306.9L423.8 308.2L429.8 309.9L430.2 308.5zM423.7 309.1a3.1 3.1 0 1 0 6.2 0a3.1 3.1 0 1 0 -6.2 0zM423.8 308.5L423.5 309.8L429.7 311L429.9 309.6zM423.4 310.4a3.2 3.2 0 1 0 6.4 0a3.2 3.2 0 1 0 -6.4 0zM423.4 310.2L423.3 311.4L429.7 311.8L429.8 310.6zM423.3 311.6a3.2 3.2 0 1 0 6.4 0a3.2 3.2 0 1 0 -6.4 0zM423.3 311.9L423.4 313L429.8 312.4L429.7 311.3zM423.4 312.7a3.2 3.2 0 1 0 6.3 0a3.2 3.2 0 1 0 -6.3 0zM423.5 313.5L423.9 314.6L429.9 313.2L429.7 312zM423.8 313.9a3.1 3.1 0 1 0 6.2 0a3.1 3.1 0 1 0 -6.2 0zM424 315L424.5 316L430.1 313.9L429.8 312.8zM424.3 315a3 3 0 1 0 6 0a3 3 0 1 0 -6 0zM424.6 316.4L425.2 317.3L430.4 314.6L430 313.6zM424.9 315.9a2.9 2.9 0 1 0 5.8 0a2.9 2.9 0 1 0 -5.8 0zM425.4 317.6L426.1 318.3L430.6 315.1L430.1 314.2zM425.5 316.7a2.8 2.8 0 1 0 5.6 0a2.8 2.8 0 1 0 -5.6 0zM426.5 318.8L427.1 319.2L430.7 315.2L430.2 314.6zM426.2 317.2a2.7 2.7 0 1 0 5.4 0a2.7 2.7 0 1 0 -5.4 0zM428 319.8L428.7 319.9L430.4 314.9L429.8 314.6zM426.9 317.4a2.6 2.6 0 1 0 5.2 0a2.6 2.6 0 1 0 -5.2 0zM429.6 320L430.3 319.9L430.1 314.9L429.4 314.8zM427.7 317.4a2.5 2.5 0 1 0 5 0a2.5 2.5 0 1 0 -5 0zM430.9 319.8L431.6 319.5L430.2 314.8L429.5 315zM428.5 317.2a2.4 2.4 0 1 0 4.9 0a2.4 2.4 0 1 0 -4.9 0zM432.1 319.3L432.8 318.9L430.6 314.7L429.8 315zM429.3 316.8a2.3 2.3 0 1 0 4.7 0a2.3 2.3 0 1 0 -4.7 0zM433.1 318.7L433.8 318.1L431.1 314.4L430.3 314.9zM430.2 316.2a2.3 2.3 0 1 0 4.5 0a2.3 2.3 0 1 0 -4.5 0zM434 317.9L434.6 317.2L431.6 314L430.9 314.6zM430.9 315.6a2.2 2.2 0 1 0 4.4 0a2.2 2.2 0 1 0 -4.4 0zM434.8 317L435.4 316.1L432.1 313.5L431.4 314.2zM431.6 314.8a2.1 2.1 0 1 0 4.3 0a2.1 2.1 0 1 0 -4.3 0zM435.6 315.9L436.2 314.8L432.6 312.6L431.9 313.6zM432.3 313.7a2.1 2.1 0 1 0 4.2 0a2.1 2.1 0 1 0 -4.2 0zM436.2 314.7L436.8 313.5L433.2 311.6L432.6 312.8zM433 312.6a2 2 0 1 0 4.1 0a2 2 0 1 0 -4.1 0zM436.9 313.4L437.4 312.2L433.8 310.5L433.2 311.7zM433.6 311.3a2 2 0 1 0 4 0a2 2 0 1 0 -4 0zM437.5 312.1L437.9 310.9L434.3 309.4L433.8 310.6zM434.1 310.1a2 2 0 1 0 4 0a2 2 0 1 0 -4 0zM438 310.8L438.3 309.6L434.7 308.4L434.2 309.4zM434.6 309a1.9 1.9 0 1 0 3.9 0a1.9 1.9 0 1 0 -3.9 0zM438.4 309.5L438.6 308.5L434.9 307.4L434.6 308.5zM434.9 308a1.9 1.9 0 1 0 3.9 0a1.9 1.9 0 1 0 -3.9 0zM438.7 308.4L438.9 307.3L435.1 306.5L434.9 307.6zM435.1 306.9a1.9 1.9 0 1 0 3.8 0a1.9 1.9 0 1 0 -3.8 0zM438.9 307.2L439 306.2L435.3 305.6L435.1 306.7zM435.2 305.9a1.9 1.9 0 1 0 3.8 0a1.9 1.9 0 1 0 -3.8 0zM439.1 306L439.1 305L435.3 304.8L435.2 305.8zM435.3 304.9a1.9 1.9 0 1 0 3.8 0a1.9 1.9 0 1 0 -3.8 0zM439.1 304.8L439.1 304L435.3 304.2L435.3 305zM435.2 304.1a1.9 1.9 0 1 0 3.8 0a1.9 1.9 0 1 0 -3.8 0zM439 303.7L438.9 302.9L435.1 303.7L435.3 304.4zM435.1 303.3a1.9 1.9 0 1 0 3.8 0a1.9 1.9 0 1 0 -3.8 0zM438.7 302.4L438.4 301.8L435 303.5L435.3 304.2zM434.8 302.6a1.9 1.9 0 1 0 3.8 0a1.9 1.9 0 1 0 -3.8 0zM438.1 301.4L437.5 300.8L434.7 303.4L435.3 303.9zM434.3 302.1a1.9 1.9 0 1 0 3.8 0a1.9 1.9 0 1 0 -3.8 0zM437.3 300.6L436.7 300.1L434.4 303.1L435 303.6zM433.6 301.6a1.9 1.9 0 1 0 3.8 0a1.9 1.9 0 1 0 -3.8 0zM436.6 300L435.9 299.6L433.9 302.8L434.5 303.2zM433 301.2a1.9 1.9 0 1 0 3.8 0a1.9 1.9 0 1 0 -3.8 0zM435.9 299.6L435.4 299.2L433.4 302.5L433.9 302.8zM432.5 300.9a1.9 1.9 0 1 0 3.8 0a1.9 1.9 0 1 0 -3.8 0zM435.5 299.3L435.1 299L432.9 302.2L433.3 302.4zM432.1 300.6a1.9 1.9 0 1 0 3.8 0a1.9 1.9 0 1 0 -3.8 0zM430.4 316.6a1.5 1.5 0 1 0 3 0a1.5 1.5 0 1 0 -3 0zM431.6 318.1L440.4 319L440.6 317.6L432.2 315.1zM439.8 318.3a0.8 0.8 0 1 0 1.5 0a0.8 0.8 0 1 0 -1.5 0z"/>
  <path d="M500.2 303.4a2.5 2.5 0 1 0 5 0a2.5 2.5 0 1 0 -5 0zM500.3 302.9L497.3 318.4L501.7 319.2L505.1 303.9zM497.3 318.8a2.2 2.2 0 1 0 4.4 0a2.2 2.2 0 1 0 -4.4 0zM496.4 304.4a1.5 1.5 0 1 0 3 0a1.5 1.5 0 1 0 -3 0zM498.7 305.7L499.4 305.3L497.8 302.6L497.1 303.1zM497 304a1.6 1.6 0 1 0 3.1 0a1.6 1.6 0 1 0 -3.1 0zM499.4 305.3L500.5 304.8L498.7 302L497.8 302.7zM497.9 303.4a1.6 1.6 0 1 0 3.3 0a1.6 1.6 0 1 0 -3.3 0zM500.4 304.8L501.7 304.2L499.9 301.2L498.7 302zM499 302.7a1.8 1.8 0 1 0 3.5 0a1.8 1.8 0 1 0 -3.5 0zM501.6 304.2L502.9 303.6L501.1 300.4L499.9 301.2zM500.1 302a1.9 1.9 0 1 0 3.7 0a1.9 1.9 0 1 0 -3.7 0zM502.8 303.6L504.1 303.1L502.3 299.6L501.2 300.3zM501.3 301.3a1.9 1.9 0 1 0 3.9 0a1.9 1.9 0 1 0 -3.9 0zM503.9 303.1L505.1 302.8L503.5 299L502.5 299.5zM502.3 300.9a2 2 0 1 0 4 0a2 2 0 1 0 -4 0zM504.8 302.8L505.9 302.6L504.8 298.7L503.8 299zM503.3 300.6a2 2 0 1 0 4.1 0a2 2 0 1 0 -4.1 0zM505.7 302.6L506.7 302.4L505.9 298.4L504.9 298.6zM504.3 300.4a2 2 0 1 0 4.1 0a2 2 0 1 0 -4.1 0zM506.5 302.4L507.5 302.3L507.1 298.3L506.1 298.4zM505.3 300.3a2 2 0 1 0 4.1 0a2 2 0 1 0 -4.1 0zM507.3 302.3L508.3 302.3L508.2 298.3L507.2 298.3zM506.2 300.3a2 2 0 1 0 4 0a2 2 0 1 0 -4 0zM508.1 302.3L508.9 302.4L509.2 298.4L508.4 298.3zM507.1 300.4a2 2 0 1 0 4 0a2 2 0 1 0 -4 0zM508.7 302.3L509.4 302.5L510.2 298.5L509.4 298.4zM507.8 300.5a2 2 0 1 0 4 0a2 2 0 1 0 -4 0zM509.1 302.4L509.8 302.6L511.1 298.8L510.5 298.6zM508.5 300.7a2 2 0 1 0 4 0a2 2 0 1 0 -4 0zM509.6 302.5L510.2 302.8L512 299.3L511.4 299zM509.1 301.1a2 2 0 1 0 4 0a2 2 0 1 0 -4 0zM509.9 302.7L510.5 303.1L512.8 299.8L512.3 299.4zM509.7 301.5a2 2 0 1 0 4 0a2 2 0 1 0 -4 0zM510.2 302.8L510.6 303.3L513.6 300.6L513.2 300.1zM510.1 302a2 2 0 1 0 4 0a2 2 0 1 0 -4 0zM510.3 302.9L510.6 303.4L514.2 301.6L513.9 301.1zM510.4 302.5a2 2 0 1 0 4 0a2 2 0 1 0 -4 0zM510.4 302.8L510.5 303.5L514.5 302.9L514.4 302.2zM510.5 303.2a2 2 0 1 0 4 0a2 2 0 1 0 -4 0zM510.5 303L510.4 303.8L514.4 304.2L514.5 303.4zM510.4 304a2 2 0 1 0 4 0a2 2 0 1 0 -4 0zM510.5 303.4L510.2 304.4L514.1 305.5L514.3 304.5zM510.1 304.9a2 2 0 1 0 4 0a2 2 0 1 0 -4 0zM510.3 304.2L509.9 305.2L513.6 306.7L514 305.7zM509.7 306a2 2 0 1 0 4 0a2 2 0 1 0 -4 0zM509.9 305L509.4 306.1L513 307.9L513.5 306.9zM509.2 307a2 2 0 1 0 4 0a2 2 0 1 0 -4 0zM509.5 305.9L508.8 307L512.2 309.1L512.9 308.1zM508.5 308a2 2 0 1 0 4 0a2 2 0 1 0 -4 0zM508.9 306.8L508.2 307.8L511.4 310.2L512.1 309.3zM507.8 309a2 2 0 1 0 4 0a2 2 0 1 0 -4 0zM508.4 307.6L507.5 308.5L510.3 311.3L511.2 310.4zM506.9 309.9a2 2 0 1 0 3.9 0a2 2 0 1 0 -3.9 0zM507.6 308.4L506.5 309.4L508.9 312.4L510.1 311.5zM505.7 310.9a1.9 1.9 0 1 0 3.9 0a1.9 1.9 0 1 0 -3.9 0zM506.5 309.4L505.3 310.4L507.5 313.4L508.8 312.5zM504.5 311.9a1.9 1.9 0 1 0 3.8 0a1.9 1.9 0 1 0 -3.8 0zM505.3 310.3L504.1 311.2L506.2 314.2L507.4 313.4zM503.3 312.7a1.8 1.8 0 1 0 3.6 0a1.8 1.8 0 1 0 -3.6 0zM504.1 311.2L503 312L505.1 314.9L506.2 314.2zM502.3 313.5a1.8 1.8 0 1 0 3.6 0a1.8 1.8 0 1 0 -3.6 0zM503 312L502.3 312.6L504.3 315.4L505.1 314.9zM501.6 314a1.8 1.8 0 1 0 3.5 0a1.8 1.8 0 1 0 -3.5 0zM501.7 314.1a2 2 0 1 0 4 0a2 2 0 1 0 -4 0zM502 315.2L502.6 315.9L505.8 313.7L505.4 313zM502.2 314.8a1.9 1.9 0 1 0 3.9 0a1.9 1.9 0 1 0 -3.9 0zM502.6 315.9L503.3 316.9L506.4 314.8L505.8 313.7zM503 315.8a1.9 1.9 0 1 0 3.8 0a1.9 1.9 0 1 0 -3.8 0zM503.3 316.9L504.2 318L507.1 316L506.4 314.8zM503.9 317a1.8 1.8 0 1 0 3.6 0a1.8 1.8 0 1 0 -3.6 0zM504.2 318L505.1 319.2L507.9 317.3L507.1 316zM504.8 318.2a1.7 1.7 0 1 0 3.4 0a1.7 1.7 0 1 0 -3.4 0zM505.1 319.2L506 320.3L508.6 318.5L507.9 317.2zM505.7 319.4a1.6 1.6 0 1 0 3.2 0a1.6 1.6 0 1 0 -3.2 0zM506.1 320.4L506.9 321.3L509.3 319.5L508.6 318.4zM506.6 320.4a1.5 1.5 0 1 0 3 0a1.5 1.5 0 1 0 -3 0zM507 321.4L507.8 322.2L509.9 320.3L509.2 319.4zM507.5 321.2a1.4 1.4 0 1 0 2.8 0a1.4 1.4 0 1 0 -2.8 0zM507.8 322.2L508.7 322.9L510.5 321.2L509.8 320.3zM508.4 322.1a1.2 1.2 0 1 0 2.5 0a1.2 1.2 0 1 0 -2.5 0zM508.7 322.9L509.6 323.6L511.1 322L510.5 321.2zM509.3 322.8a1.1 1.1 0 1 0 2.2 0a1.1 1.1 0 1 0 -2.2 0zM509.6 323.6L510.4 324.1L511.7 322.8L511.1 322zM510.1 323.4a1 1 0 1 0 1.9 0a1 1 0 1 0 -1.9 0zM510.4 324.2L511.1 324.6L512.2 323.4L511.7 322.7zM510.8 324a0.8 0.8 0 1 0 1.7 0a0.8 0.8 0 1 0 -1.7 0zM511.1 324.6L511.6 324.9L512.6 323.9L512.2 323.4zM511.4 324.4a0.8 0.8 0 1 0 1.5 0a0.8 0.8 0 1 0 -1.5 0z"/>
  <path d="M583.2 305.3a1.7 1.7 0 1 0 3.4 0a1.7 1.7 0 1 0 -3.4 0zM586.4 306.1L586.6 305.8L583.6 304.1L583.4 304.5zM583.4 305a1.7 1.7 0 1 0 3.4 0a1.7 1.7 0 1 0 -3.4 0zM586.5 305.9L586.8 305.5L584 303.6L583.7 304zM583.7 304.5a1.7 1.7 0 1 0 3.4 0a1.7 1.7 0 1 0 -3.4 0zM586.8 305.4L587.2 304.9L584.3 303.1L583.9 303.6zM584 304a1.7 1.7 0 1 0 3.4 0a1.7 1.7 0 1 0 -3.4 0zM587.2 304.8L587.5 304.2L584.5 302.7L584.2 303.2zM584.3 303.4a1.7 1.7 0 1 0 3.4 0a1.7 1.7 0 1 0 -3.4 0zM587.6 303.8L587.8 303.3L584.5 302.5L584.3 303zM584.4 302.9a1.7 1.7 0 1 0 3.4 0a1.7 1.7 0 1 0 -3.4 0zM587.8 302.5L587.6 302.1L584.4 302.9L584.5 303.4zM584.3 302.5a1.7 1.7 0 1 0 3.4 0a1.7 1.7 0 1 0 -3.4 0zM587.2 301.3L586.9 300.9L584.4 303.3L584.8 303.7zM583.9 302.1a1.7 1.7 0 1 0 3.4 0a1.7 1.7 0 1 0 -3.4 0zM586.6 300.7L586.1 300.3L584.1 303.1L584.6 303.5zM583.4 301.7a1.7 1.7 0 1 0 3.4 0a1.7 1.7 0 1 0 -3.4 0zM585.9 300.2L585.2 299.8L583.6 302.9L584.3 303.2zM582.7 301.3a1.7 1.7 0 1 0 3.4 0a1.7 1.7 0 1 0 -3.4 0zM585 299.7L584.2 299.4L583 302.7L583.8 303zM581.9 301.1a1.7 1.7 0 1 0 3.4 0a1.7 1.7 0 1 0 -3.4 0zM583.9 299.4L583 299.2L582.4 302.6L583.3 302.7zM581 300.9a1.7 1.7 0 1 0 3.5 0a1.7 1.7 0 1 0 -3.5 0zM582.7 299.2L581.8 299.2L581.8 302.6L582.7 302.6zM580 300.9a1.8 1.8 0 1 0 3.5 0a1.8 1.8 0 1 0 -3.5 0zM581.5 299.2L580.4 299.3L581.1 302.8L582.1 302.6zM579 301.1a1.8 1.8 0 1 0 3.6 0a1.8 1.8 0 1 0 -3.6 0zM580.3 299.4L579.1 299.7L580.1 303.2L581.3 302.8zM577.8 301.4a1.8 1.8 0 1 0 3.7 0a1.8 1.8 0 1 0 -3.7 0zM578.9 299.7L577.7 300.2L579 303.7L580.2 303.2zM576.5 301.9a1.9 1.9 0 1 0 3.8 0a1.9 1.9 0 1 0 -3.8 0zM577.6 300.2L576.3 300.7L577.9 304.2L579.1 303.6zM575.2 302.5a1.9 1.9 0 1 0 3.9 0a1.9 1.9 0 1 0 -3.9 0zM576.2 300.8L575 301.4L576.9 304.8L578 304.2zM574 303.1a2 2 0 1 0 3.9 0a2 2 0 1 0 -3.9 0zM574.9 301.5L574 302L576.2 305.4L577.1 304.7zM573.1 303.7a2 2 0 1 0 4 0a2 2 0 1 0 -4 0zM573.8 302.2L573 302.9L575.7 305.8L576.4 305.2zM572.4 304.4a2 2 0 1 0 4 0a2 2 0 1 0 -4 0zM572.8 303.1L572.2 303.8L575.3 306.4L575.9 305.7zM571.7 305.1a2 2 0 1 0 4 0a2 2 0 1 0 -4 0zM572 304L571.5 304.8L574.9 307L575.4 306.2zM571.2 305.9a2 2 0 1 0 4 0a2 2 0 1 0 -4 0zM571.4 305.1L571 305.9L574.7 307.5L575.1 306.7zM570.9 306.7a2 2 0 1 0 4 0a2 2 0 1 0 -4 0zM570.9 306.3L570.7 307L574.7 307.8L574.8 307.1zM570.7 307.4a2 2 0 1 0 4 0a2 2 0 1 0 -4 0zM570.7 307.7L570.8 308.4L574.8 307.8L574.7 307.2zM570.8 308.1a2 2 0 1 0 4 0a2 2 0 1 0 -4 0zM571.2 309.3L571.6 309.9L574.8 307.4L574.4 306.9zM571.2 308.7a2 2 0 1 0 4 0a2 2 0 1 0 -4 0zM572.1 310.3L572.8 310.8L575.1 307.5L574.3 307zM572 309.1a2 2 0 1 0 4 0a2 2 0 1 0 -4 0zM573.1 311L574 311.4L575.7 307.8L574.8 307.3zM572.9 309.6a2 2 0 1 0 4 0a2 2 0 1 0 -4 0zM574.1 311.4L575.2 311.9L576.7 308.1L575.6 307.7zM573.9 310a2 2 0 1 0 4 0a2 2 0 1 0 -4 0zM575.2 311.9L576.2 312.3L577.7 308.5L576.7 308.1zM574.9 310.4a2 2 0 1 0 4 0a2 2 0 1 0 -4 0zM576.1 312.2L577 312.6L578.6 309L577.8 308.6zM575.8 310.8a2 2 0 1 0 4 0a2 2 0 1 0 -4 0zM577 312.6L577.8 313L579.4 309.4L578.6 309zM576.6 311.2a2 2 0 1 0 4 0a2 2 0 1 0 -4 0zM577.9 313L578.8 313.4L580.2 309.6L579.3 309.3zM577.5 311.5a2 2 0 1 0 4 0a2 2 0 1 0 -4 0zM578.8 313.4L579.6 313.7L581 309.9L580.2 309.6zM578.3 311.8a2 2 0 1 0 4 0a2 2 0 1 0 -4 0zM579.5 313.6L580.2 314L581.8 310.3L581.1 310zM579 312.1a2 2 0 1 0 4 0a2 2 0 1 0 -4 0zM579.9 313.8L580.5 314.2L582.7 310.8L582.1 310.5zM579.6 312.5a2 2 0 1 0 4 0a2 2 0 1 0 -4 0zM580 313.7L580.4 314.2L583.6 311.8L583.2 311.3zM580 313a2 2 0 1 0 4 0a2 2 0 1 0 -4 0zM580.1 313.5L580.2 314.1L584.1 313.1L583.9 312.5zM580.2 313.6a2 2 0 1 0 4 0a2 2 0 1 0 -4 0zM580.2 313.6L580.2 314.4L584.2 314.4L584.2 313.6zM580.2 314.4a2 2 0 1 0 4 0a2 2 0 1 0 -4 0zM580.2 314L580.1 314.9L584 315.6L584.1 314.7zM580 315.2a2 2 0 1 0 4 0a2 2 0 1 0 -4 0zM580.1 314.6L579.8 315.4L583.6 316.7L583.9 315.9zM579.7 316a2 2 0 1 0 4 0a2 2 0 1 0 -4 0zM580 315.1L579.6 315.8L583.1 317.7L583.5 317zM579.3 316.8a2 2 0 1 0 4 0a2 2 0 1 0 -4 0zM579.8 315.5L579.3 316.1L582.3 318.7L582.9 318.1zM578.8 317.4a2 2 0 1 0 4 0a2 2 0 1 0 -4 0zM579.6 315.8L578.9 316.3L581.3 319.5L582 319zM578.1 317.9a2 2 0 1 0 4 0a2 2 0 1 0 -4 0zM579.2 316.1L578.2 316.6L580.1 320.2L581 319.7zM577.1 318.4a2 2 0 1 0 4 0a2 2 0 1 0 -4 0zM578.4 316.5L577.4 316.9L578.9 320.7L579.9 320.3zM576.1 318.8a2 2 0 1 0 4 0a2 2 0 1 0 -4 0zM577.5 316.9L576.4 317.2L577.6 321.1L578.7 320.8zM575 319.1a2 2 0 1 0 4 0a2 2 0 1 0 -4 0zM576.6 317.2L575.6 317.4L576.4 321.3L577.4 321.1zM574 319.3a2 2 0 1 0 4 0a2 2 0 1 0 -4 0zM575.9 317.3L575 317.4L575.2 321.4L576.1 321.4zM573.1 319.4a2 2 0 1 0 4 0a2 2 0 1 0 -4 0zM575.5 317.4L574.8 317.3L573.9 321.1L574.7 321.4zM572.4 319.2a2 2 0 1 0 3.9 0a2 2 0 1 0 -3.9 0zM575.2 317.5L574.5 317.1L572.7 320.5L573.4 321zM571.7 318.8a1.9 1.9 0 1 0 3.8 0a1.9 1.9 0 1 0 -3.8 0zM574.7 317.3L574 316.8L571.8 319.8L572.4 320.4zM571 318.3a1.9 1.9 0 1 0 3.7 0a1.9 1.9 0 1 0 -3.7 0zM574.1 316.9L573.5 316.4L571.1 319.1L571.7 319.7zM570.5 317.8a1.8 1.8 0 1 0 3.6 0a1.8 1.8 0 1 0 -3.6 0zM573.5 316.5L573 316L570.6 318.6L571.1 319.1zM570 317.3a1.7 1.7 0 1 0 3.5 0a1.7 1.7 0 1 0 -3.5 0zM572.9 316L572.5 315.7L570.3 318.3L570.7 318.7zM569.7 317a1.7 1.7 0 1 0 3.4 0a1.7 1.7 0 1 0 -3.4 0z"/>
  <path d="M640.7 303.7a1.5 1.5 0 1 0 3 0a1.5 1.5 0 1 0 -3 0zM642.8 305.1L643.6 304.8L642.4 302L641.6 302.3zM641.5 303.4a1.5 1.5 0 1 0 3 0a1.5 1.5 0 1 0 -3 0zM643.6 304.8L644.7 304.3L643.5 301.5L642.4 302zM642.6 302.9a1.5 1.5 0 1 0 3.1 0a1.5 1.5 0 1 0 -3.1 0zM644.7 304.3L646.1 303.7L644.8 300.9L643.5 301.5zM643.9 302.3a1.6 1.6 0 1 0 3.1 0a1.6 1.6 0 1 0 -3.1 0zM646 303.8L647.5 303.2L646.3 300.3L644.9 300.9zM645.3 301.7a1.6 1.6 0 1 0 3.2 0a1.6 1.6 0 1 0 -3.2 0zM647.4 303.2L648.9 302.7L647.7 299.7L646.3 300.2zM646.7 301.2a1.6 1.6 0 1 0 3.2 0a1.6 1.6 0 1 0 -3.2 0zM648.8 302.7L650.1 302.3L649.1 299.3L647.8 299.7zM648 300.8a1.6 1.6 0 1 0 3.2 0a1.6 1.6 0 1 0 -3.2 0zM650 302.4L651.2 302L650.4 299L649.2 299.2zM649.2 300.5a1.6 1.6 0 1 0 3.2 0a1.6 1.6 0 1 0 -3.2 0zM651.1 302L652.3 301.7L651.7 298.7L650.5 299zM650.4 300.2a1.5 1.5 0 1 0 3.1 0a1.5 1.5 0 1 0 -3.1 0zM652.2 301.8L653.4 301.5L652.9 298.6L651.7 298.7zM651.7 300a1.5 1.5 0 1 0 3 0a1.5 1.5 0 1 0 -3 0zM653.3 301.5L654.5 301.3L654.2 298.5L653 298.6zM652.9 299.9a1.4 1.4 0 1 0 2.9 0a1.4 1.4 0 1 0 -2.9 0zM654.4 301.3L655.6 301.2L655.4 298.5L654.3 298.5zM654.1 299.9a1.4 1.4 0 1 0 2.7 0a1.4 1.4 0 1 0 -2.7 0zM655.5 301.2L656.7 301.2L656.7 298.6L655.6 298.5zM655.4 299.9a1.3 1.3 0 1 0 2.6 0a1.3 1.3 0 1 0 -2.6 0zM656.5 301.2L657.8 301.3L658.2 298.9L656.9 298.6zM656.8 300.1a1.2 1.2 0 1 0 2.4 0a1.2 1.2 0 1 0 -2.4 0zM657.7 301.3L659.1 301.5L659.7 299.3L658.3 298.9zM658.3 300.4a1.1 1.1 0 1 0 2.2 0a1.1 1.1 0 1 0 -2.2 0zM659.1 301.5L660.5 301.8L661.1 299.9L659.7 299.4zM659.8 300.8a1 1 0 1 0 2 0a1 1 0 1 0 -2 0zM660.5 301.8L661.8 302.1L662.4 300.4L661.1 299.9zM661.2 301.3a0.9 0.9 0 1 0 1.8 0a0.9 0.9 0 1 0 -1.8 0zM661.8 302.1L662.9 302.4L663.5 300.9L662.4 300.4zM662.4 301.6a0.8 0.8 0 1 0 1.6 0a0.8 0.8 0 1 0 -1.6 0zM663 302.4L663.8 302.6L664.2 301.2L663.4 300.9zM663.2 301.9a0.8 0.8 0 1 0 1.5 0a0.8 0.8 0 1 0 -1.5 0zM649.1 302.3a2.6 2.6 0 1 0 5.2 0a2.6 2.6 0 1 0 -5.2 0zM649.2 301.6L648.9 302.8L653.9 304.1L654.2 303zM648.8 303.4a2.6 2.6 0 1 0 5.2 0a2.6 2.6 0 1 0 -5.2 0zM648.9 302.8L648.5 304.4L653.4 305.7L653.9 304.1zM648.4 305a2.6 2.6 0 1 0 5.1 0a2.6 2.6 0 1 0 -5.1 0zM648.5 304.4L648 306.3L652.9 307.6L653.4 305.7zM647.9 306.9a2.5 2.5 0 1 0 5 0a2.5 2.5 0 1 0 -5 0zM648 306.3L647.5 308.3L652.3 309.5L652.9 307.5zM647.4 308.9a2.5 2.5 0 1 0 5 0a2.5 2.5 0 1 0 -5 0zM647.5 308.3L647.1 310.3L651.8 311.4L652.3 309.5zM647 310.9a2.4 2.4 0 1 0 4.9 0a2.4 2.4 0 1 0 -4.9 0zM647.1 310.4L646.7 312.1L651.5 313.1L651.9 311.4zM646.7 312.6a2.4 2.4 0 1 0 4.8 0a2.4 2.4 0 1 0 -4.8 0zM646.7 312.2L646.5 313.9L651.2 314.6L651.5 313zM646.5 314.2a2.4 2.4 0 1 0 4.7 0a2.4 2.4 0 1 0 -4.7 0zM646.5 314L646.4 315.7L651 316.2L651.2 314.5zM646.4 315.9a2.3 2.3 0 1 0 4.6 0a2.3 2.3 0 1 0 -4.6 0zM646.4 315.7L646.3 317.4L650.8 317.7L651 316.1zM646.3 317.5a2.2 2.2 0 1 0 4.5 0a2.2 2.2 0 1 0 -4.5 0zM646.3 317.4L646.3 318.9L650.6 319.2L650.8 317.7zM646.3 319a2.2 2.2 0 1 0 4.4 0a2.2 2.2 0 1 0 -4.4 0zM646.3 318.9L646.2 320.2L650.5 320.4L650.6 319.2zM646.2 320.3a2.1 2.1 0 1 0 4.3 0a2.1 2.1 0 1 0 -4.3 0zM646.2 320.1L646.2 321L650.4 321.4L650.5 320.4zM646.2 321.2a2.1 2.1 0 1 0 4.2 0a2.1 2.1 0 1 0 -4.2 0z"/>
  <path d="M426.8 355.7a2.4 2.4 0 1 0 4.8 0a2.4 2.4 0 1 0 -4.8 0zM427 354.7L426.6 355.6L431 357.6L431.4 356.7zM426.4 356.6a2.4 2.4 0 1 0 4.8 0a2.4 2.4 0 1 0 -4.8 0zM426.6 355.6L426 356.9L430.4 358.9L431 357.6zM425.8 357.9a2.4 2.4 0 1 0 4.9 0a2.4 2.4 0 1 0 -4.9 0zM426 356.9L425.3 358.4L429.7 360.5L430.4 358.9zM425.1 359.4a2.4 2.4 0 1 0 4.9 0a2.4 2.4 0 1 0 -4.9 0zM425.2 358.5L424.5 360.1L429.1 362L429.8 360.4zM424.3 361.1a2.5 2.5 0 1 0 4.9 0a2.5 2.5 0 1 0 -4.9 0zM424.5 360.2L423.9 361.7L428.5 363.5L429.1 361.9zM423.7 362.6a2.5 2.5 0 1 0 5 0a2.5 2.5 0 1 0 -5 0zM423.8 361.9L423.4 363.3L428.2 364.7L428.6 363.3zM423.3 364a2.5 2.5 0 1 0 5 0a2.5 2.5 0 1 0 -5 0zM423.3 363.5L423.1 364.8L428 365.7L428.3 364.5zM423.1 365.2a2.5 2.5 0 1 0 5 0a2.5 2.5 0 1 0 -5 0zM423.1 365L422.9 366.2L427.9 366.8L428.1 365.5zM422.9 366.5a2.5 2.5 0 1 0 5 0a2.5 2.5 0 1 0 -5 0zM422.9 366.4L422.9 367.6L427.9 367.8L427.9 366.6zM422.9 367.7a2.5 2.5 0 1 0 5 0a2.5 2.5 0 1 0 -5 0zM422.9 367.8L422.9 368.9L428 368.7L427.9 367.6zM422.9 368.8a2.5 2.5 0 1 0 5 0a2.5 2.5 0 1 0 -5 0zM422.9 369.1L423.1 370.1L428.1 369.4L427.9 368.4zM423.1 369.8a2.5 2.5 0 1 0 5 0a2.5 2.5 0 1 0 -5 0zM423.1 370.4L423.4 371.2L428.2 370L428 369.1zM423.3 370.6a2.5 2.5 0 1 0 5 0a2.5 2.5 0 1 0 -5 0zM423.5 371.7L423.9 372.3L428.4 370.2L428.1 369.5zM423.7 371.3a2.5 2.5 0 1 0 4.9 0a2.5 2.5 0 1 0 -4.9 0zM424.1 372.8L424.6 373.3L428.5 370.4L428.1 369.8zM424.1 371.9a2.4 2.4 0 1 0 4.9 0a2.4 2.4 0 1 0 -4.9 0zM425 373.7L425.5 374.1L428.7 370.6L428.2 370.1zM424.7 372.3a2.4 2.4 0 1 0 4.8 0a2.4 2.4 0 1 0 -4.8 0zM425.9 374.4L426.5 374.7L428.8 370.6L428.2 370.3zM425.3 372.7a2.3 2.3 0 1 0 4.7 0a2.3 2.3 0 1 0 -4.7 0zM427.1 374.9L427.7 375L428.9 370.6L428.3 370.4zM426 372.8a2.3 2.3 0 1 0 4.6 0a2.3 2.3 0 1 0 -4.6 0zM428.4 375.1L429 375L428.8 370.6L428.2 370.5zM426.6 372.8a2.2 2.2 0 1 0 4.5 0a2.2 2.2 0 1 0 -4.5 0zM429.7 374.9L430.3 374.7L428.8 370.5L428.1 370.7zM427.3 372.6a2.2 2.2 0 1 0 4.5 0a2.2 2.2 0 1 0 -4.5 0zM430.7 374.5L431.4 374L429.1 370.3L428.4 370.7zM428 372.1a2.2 2.2 0 1 0 4.4 0a2.2 2.2 0 1 0 -4.4 0zM431.6 373.9L432.3 373.3L429.5 369.8L428.8 370.4zM428.7 371.6a2.2 2.2 0 1 0 4.4 0a2.2 2.2 0 1 0 -4.4 0zM432.5 373.1L433.2 372.4L430.1 369.3L429.4 370zM429.4 370.8a2.2 2.2 0 1 0 4.4 0a2.2 2.2 0 1 0 -4.4 0zM433.3 372.3L434.1 371.5L430.7 368.6L430 369.4zM430.2 370a2.2 2.2 0 1 0 4.4 0a2.2 2.2 0 1 0 -4.4 0zM434.1 371.4L434.8 370.4L431.4 367.8L430.6 368.7zM430.9 369.1a2.2 2.2 0 1 0 4.4 0a2.2 2.2 0 1 0 -4.4 0zM434.9 370.3L435.6 369.2L432 366.8L431.3 367.9zM431.6 368a2.2 2.2 0 1 0 4.3 0a2.2 2.2 0 1 0 -4.3 0zM435.7 369.1L436.4 367.8L432.7 365.7L431.9 366.9zM432.4 366.7a2.1 2.1 0 1 0 4.3 0a2.1 2.1 0 1 0 -4.3 0zM436.4 367.7L437.1 366.3L433.4 364.4L432.7 365.7zM433.2 365.3a2.1 2.1 0 1 0 4.2 0a2.1 2.1 0 1 0 -4.2 0zM437.1 366.2L437.8 364.8L434.1 363L433.4 364.4zM433.9 363.9a2 2 0 1 0 4.1 0a2 2 0 1 0 -4.1 0zM437.8 364.8L438.4 363.5L434.8 361.7L434.1 363zM434.6 362.6a2 2 0 1 0 4 0a2 2 0 1 0 -4 0zM438.4 363.5L439 362.4L435.4 360.6L434.8 361.7zM435.2 361.5a2 2 0 1 0 4 0a2 2 0 1 0 -4 0zM439 362.5L439.5 361.6L435.9 359.6L435.4 360.5zM435.7 360.6a2 2 0 1 0 4 0a2 2 0 1 0 -4 0zM439.5 361.6L439.9 360.8L436.4 358.8L435.9 359.6zM436.1 359.8a2 2 0 1 0 4.1 0a2 2 0 1 0 -4.1 0zM439.9 360.8L440.4 360.1L436.7 358L436.4 358.8zM436.5 359.1a2.1 2.1 0 1 0 4.2 0a2.1 2.1 0 1 0 -4.2 0zM440.4 360.1L440.8 359.5L437 357.4L436.7 358zM436.8 358.5a2.1 2.1 0 1 0 4.3 0a2.1 2.1 0 1 0 -4.3 0zM440.8 359.5L441.1 359.1L437.3 356.9L437 357.4zM437 358a2.2 2.2 0 1 0 4.3 0a2.2 2.2 0 1 0 -4.3 0zM441.1 359.1L441.3 358.7L437.5 356.5L437.3 356.9zM437.2 357.6a2.2 2.2 0 1 0 4.4 0a2.2 2.2 0 1 0 -4.4 0zM437.2 357.6a2.2 2.2 0 1 0 4.4 0a2.2 2.2 0 1 0 -4.4 0zM437.3 357L433 374.2L436.8 375.2L441.5 358.2zM432.9 374.7a2 2 0 1 0 4 0a2 2 0 1 0 -4 0z"/>
  <path d="M499.6 356a2.2 2.2 0 1 0 4.4 0a2.2 2.2 0 1 0 -4.4 0zM499.6 355.7L499.4 356.7L503.9 357.3L504 356.3zM499.4 357a2.3 2.3 0 1 0 4.5 0a2.3 2.3 0 1 0 -4.5 0zM499.4 356.6L499.2 358L503.8 358.6L503.9 357.3zM499.1 358.3a2.3 2.3 0 1 0 4.7 0a2.3 2.3 0 1 0 -4.7 0zM499.1 358L498.8 359.6L503.7 360.2L503.8 358.6zM498.8 359.9a2.5 2.5 0 1 0 4.9 0a2.5 2.5 0 1 0 -4.9 0zM498.8 359.6L498.5 361.3L503.6 361.9L503.7 360.2zM498.5 361.6a2.6 2.6 0 1 0 5.1 0a2.6 2.6 0 1 0 -5.1 0zM498.5 361.3L498.2 363L503.5 363.6L503.6 361.9zM498.2 363.3a2.6 2.6 0 1 0 5.3 0a2.6 2.6 0 1 0 -5.3 0zM498.2 363.1L498 364.7L503.4 365.1L503.5 363.5zM498 364.9a2.7 2.7 0 1 0 5.4 0a2.7 2.7 0 1 0 -5.4 0zM498 364.8L497.9 366.4L503.4 366.6L503.4 365zM497.9 366.5a2.7 2.7 0 1 0 5.5 0a2.7 2.7 0 1 0 -5.5 0zM497.9 366.5L497.9 368.2L503.4 368.2L503.4 366.5zM497.9 368.2a2.7 2.7 0 1 0 5.5 0a2.7 2.7 0 1 0 -5.5 0zM497.9 368.2L497.9 369.9L503.4 369.9L503.4 368.2zM497.9 369.9a2.7 2.7 0 1 0 5.5 0a2.7 2.7 0 1 0 -5.5 0zM497.9 370L497.9 371.5L503.4 371.4L503.4 369.9zM497.9 371.5a2.7 2.7 0 1 0 5.4 0a2.7 2.7 0 1 0 -5.4 0zM497.9 371.5L498 372.9L503.4 372.8L503.4 371.4zM498 372.8a2.7 2.7 0 1 0 5.4 0a2.7 2.7 0 1 0 -5.4 0zM498 372.9L498 373.8L503.4 373.8L503.4 372.8zM498 373.8a2.7 2.7 0 1 0 5.4 0a2.7 2.7 0 1 0 -5.4 0zM499 373.8a2.5 2.5 0 1 0 5 0a2.5 2.5 0 1 0 -5 0zM503.8 374.9L504.2 373.9L499.8 371.8L499.2 372.7zM499.5 372.8a2.4 2.4 0 1 0 4.9 0a2.4 2.4 0 1 0 -4.9 0zM504.2 373.9L504.7 372.5L500.4 370.5L499.7 371.8zM500.2 371.5a2.4 2.4 0 1 0 4.7 0a2.4 2.4 0 1 0 -4.7 0zM504.7 372.5L505.4 370.9L501.2 369L500.4 370.5zM501 370a2.3 2.3 0 1 0 4.6 0a2.3 2.3 0 1 0 -4.6 0zM505.4 371L506.1 369.2L502.2 367.3L501.3 369zM502 368.3a2.2 2.2 0 1 0 4.4 0a2.2 2.2 0 1 0 -4.4 0zM506.1 369.3L506.9 367.5L503.2 365.6L502.2 367.3zM503 366.5a2.1 2.1 0 1 0 4.2 0a2.1 2.1 0 1 0 -4.2 0zM506.9 367.6L507.7 365.9L504.3 363.9L503.2 365.5zM504 364.9a2 2 0 1 0 4 0a2 2 0 1 0 -4 0zM507.7 366L508.7 364.2L505.5 362.1L504.3 363.8zM505.2 363.2a1.9 1.9 0 1 0 3.8 0a1.9 1.9 0 1 0 -3.8 0zM508.7 364.3L509.9 362.3L507 360.3L505.6 362.1zM506.6 361.3a1.8 1.8 0 1 0 3.6 0a1.8 1.8 0 1 0 -3.6 0zM509.9 362.4L511.2 360.4L508.4 358.4L507 360.2zM508.1 359.4a1.7 1.7 0 1 0 3.4 0a1.7 1.7 0 1 0 -3.4 0zM511.2 360.4L512.5 358.6L509.9 356.6L508.5 358.4zM509.5 357.6a1.6 1.6 0 1 0 3.3 0a1.6 1.6 0 1 0 -3.3 0zM512.5 358.6L513.5 357L511.1 355.2L509.9 356.6zM510.7 356.1a1.6 1.6 0 1 0 3.1 0a1.6 1.6 0 1 0 -3.1 0zM513.5 357L514.3 355.9L511.9 354.1L511 355.2zM511.6 355a1.5 1.5 0 1 0 3 0a1.5 1.5 0 1 0 -3 0z"/>
  <path d="M570.5 356.4a2.2 2.2 0 1 0 4.5 0a2.2 2.2 0 1 0 -4.5 0zM570.6 356.1L567.9 374.4L572.9 375L575 356.7zM567.9 374.7a2.5 2.5 0 1 0 5 0a2.5 2.5 0 1 0 -5 0zM568.5 374.7a2.3 2.3 0 1 0 4.6 0a2.3 2.3 0 1 0 -4.6 0zM572.8 375.9L581.9 360.1L578.1 357.9L568.8 373.5zM577.8 359a2.2 2.2 0 1 0 4.4 0a2.2 2.2 0 1 0 -4.4 0zM577.8 359a2.2 2.2 0 1 0 4.4 0a2.2 2.2 0 1 0 -4.4 0zM577.8 358.9L576.8 374.6L581.8 374.8L582.2 359.1zM576.8 374.7a2.5 2.5 0 1 0 5 0a2.5 2.5 0 1 0 -5 0zM577.3 374.7a2.4 2.4 0 1 0 4.8 0a2.4 2.4 0 1 0 -4.8 0zM581.8 375.9L591.8 356.9L588.2 354.9L577.6 373.5zM588 355.9a2 2 0 1 0 4 0a2 2 0 1 0 -4 0z"/>
  <path d="M647.7 356.3a2 2 0 1 0 4 0a2 2 0 1 0 -4 0zM647.8 356.9L648.1 358L652 356.7L651.6 355.7zM648 357.3a2 2 0 1 0 4 0a2 2 0 1 0 -4 0zM648.1 358L648.6 359.4L652.4 358.1L652 356.7zM648.5 358.7a2 2 0 1 0 4.1 0a2 2 0 1 0 -4.1 0zM648.6 359.4L649.1 361.1L653 359.8L652.4 358.1zM649 360.4a2 2 0 1 0 4.1 0a2 2 0 1 0 -4.1 0zM649.1 361.1L649.8 362.9L653.6 361.6L653 359.8zM649.7 362.3a2.1 2.1 0 1 0 4.1 0a2.1 2.1 0 1 0 -4.1 0zM649.8 363L650.5 364.8L654.3 363.4L653.6 361.5zM650.3 364.1a2 2 0 1 0 4.1 0a2 2 0 1 0 -4.1 0zM650.5 364.9L651.3 366.6L654.9 365L654.3 363.3zM651.1 365.8a2 2 0 1 0 4 0a2 2 0 1 0 -4 0zM651.3 366.7L652.2 368.4L655.6 366.7L654.9 364.9zM652 367.5a1.9 1.9 0 1 0 3.8 0a1.9 1.9 0 1 0 -3.8 0zM652.2 368.4L653.3 370.2L656.5 368.6L655.6 366.7zM653.1 369.4a1.8 1.8 0 1 0 3.6 0a1.8 1.8 0 1 0 -3.6 0zM653.3 370.3L654.5 372.1L657.3 370.6L656.5 368.6zM654.3 371.3a1.6 1.6 0 1 0 3.2 0a1.6 1.6 0 1 0 -3.2 0zM654.5 372.1L655.6 373.8L658.2 372.4L657.3 370.6zM655.4 373.1a1.5 1.5 0 1 0 2.9 0a1.5 1.5 0 1 0 -2.9 0zM655.6 373.8L656.5 375.3L658.9 374L658.2 372.4zM656.4 374.6a1.3 1.3 0 1 0 2.7 0a1.3 1.3 0 1 0 -2.7 0zM656.5 375.3L657.2 376.3L659.4 375.1L658.9 374zM657 375.7a1.2 1.2 0 1 0 2.5 0a1.2 1.2 0 1 0 -2.5 0zM657.2 357.6a2 2 0 1 0 4 0a2 2 0 1 0 -4 0zM657.6 356.4L656.8 357.3L660 359.8L660.8 358.8zM656.4 358.6a2 2 0 1 0 4 0a2 2 0 1 0 -4 0zM656.8 357.3L655.7 358.7L658.9 361.2L660 359.9zM655.3 359.9a2.1 2.1 0 1 0 4.1 0a2.1 2.1 0 1 0 -4.1 0zM655.7 358.7L654.4 360.2L657.7 362.9L658.9 361.2zM653.9 361.6a2.1 2.1 0 1 0 4.2 0a2.1 2.1 0 1 0 -4.2 0zM654.4 360.3L653 362L656.3 364.6L657.7 362.9zM652.5 363.3a2.1 2.1 0 1 0 4.3 0a2.1 2.1 0 1 0 -4.3 0zM652.9 362L651.6 363.8L655.1 366.4L656.4 364.6zM651.2 365.1a2.2 2.2 0 1 0 4.4 0a2.2 2.2 0 1 0 -4.4 0zM651.6 363.8L650.4 365.4L654 368L655.1 366.3zM650 366.7a2.2 2.2 0 1 0 4.4 0a2.2 2.2 0 1 0 -4.4 0zM650.3 365.5L649.3 367.2L653.1 369.5L654.1 367.9zM649 368.4a2.2 2.2 0 1 0 4.4 0a2.2 2.2 0 1 0 -4.4 0zM649.3 367.3L648.2 369.1L652.1 371.2L653.1 369.4zM648 370.2a2.2 2.2 0 1 0 4.4 0a2.2 2.2 0 1 0 -4.4 0zM648.2 369.1L647.3 370.9L651.2 373L652.1 371.2zM647 372a2.2 2.2 0 1 0 4.4 0a2.2 2.2 0 1 0 -4.4 0zM647.2 371L646.4 372.6L650.3 374.7L651.2 373zM646.1 373.7a2.2 2.2 0 1 0 4.4 0a2.2 2.2 0 1 0 -4.4 0zM646.4 372.7L645.7 374.1L649.6 376.1L650.3 374.6zM645.4 375.1a2.2 2.2 0 1 0 4.4 0a2.2 2.2 0 1 0 -4.4 0zM645.7 374.1L645.1 375.1L649.1 377.1L649.6 376.1zM644.9 376.1a2.2 2.2 0 1 0 4.4 0a2.2 2.2 0 1 0 -4.4 0z"/>
 </g>
 <!-- endglyphs -->

 <!-- sidebar icons -->
 <!-- All Fonts -->
 <g stroke="#1d2172" stroke-width="1.1" stroke-linejoin="round" fill="none">
  <rect x="57.6" y="84" width="12.200" height="12.300" rx="1"/>
  <path d="M69.500 84L68.200 81.700H55.700V94.300L57.600 96.200" />
  <path d="M56 82V94.300" stroke-width="1.800"/>
  <path d="M61.600 93V86.600H65.500M61.600 89.600H64.800" stroke-width="1.100"/>
 </g>
 <!-- Computer -->
 <rect x="55.700" y="108.400" width="14.800" height="11.800" rx="1.200" fill="#d6d8ee" stroke="#62647f" stroke-width="1"/>
 <rect x="56.700" y="109.400" width="12.800" height="8" fill="#a8abc8"/>
 <path d="M60.300 122.200H65.900" stroke="#62647f" stroke-width="1.200"/>
 <path d="M62 120.500H64.200V122H62z" fill="#8a8ca8"/>
 <!-- User -->
 <path d="M63.100 134.800c1.900 0 2.900 1.500 2.900 3.400c0 1.500-.6 2.800-1.200 3.500v1.300c0 .5 .4 .8 1.500 1.100c2.500 .7 4 1.500 4 3v1.100h-14.500v-1.100c0-1.500 1.500-2.300 4-3c1.100-.3 1.500-.6 1.500-1.100v-1.300c-.6-.7-1.200-2-1.200-3.500c0-1.900 1-3.400 3-3.400z" fill="#3d3f5e"/>
 <!-- English -->
 <g stroke="#55576f" stroke-width="1" stroke-linejoin="round" fill="none">
  <rect x="57" y="193.400" width="12.800" height="13.200" rx="1"/>
  <path d="M69.400 193.400L68.200 191.300H55.200V204.600L57 206.400" />
  <path d="M55.500 191.500V204.600" stroke-width="1.500"/>
  <path d="M61.400 203V196.400H65.400M61.400 199.500H64.600" stroke-width="1.100"/>
 </g>
 <!-- Gear -->
 <g transform="translate(63,225)">
  <circle r="4.400" stroke="#3f4159" stroke-width="3.100" fill="none"/>
  <g fill="#3f4159">
   <rect x="-1.500" y="-7.800" width="3" height="3" />
   <rect x="-1.500" y="-7.800" width="3" height="3" transform="rotate(45)"/>
   <rect x="-1.500" y="-7.800" width="3" height="3" transform="rotate(90)"/>
   <rect x="-1.500" y="-7.800" width="3" height="3" transform="rotate(135)"/>
   <rect x="-1.500" y="-7.800" width="3" height="3" transform="rotate(180)"/>
   <rect x="-1.500" y="-7.800" width="3" height="3" transform="rotate(225)"/>
   <rect x="-1.500" y="-7.800" width="3" height="3" transform="rotate(270)"/>
   <rect x="-1.500" y="-7.800" width="3" height="3" transform="rotate(315)"/>
  </g>
 </g>
 <!-- Collections -->
 <g stroke="#5c5e7a" stroke-width="1" fill="none" stroke-linejoin="round">
  <path d="M56.300 288.500H54.500V277.200H68.700V278.800"/>
  <rect x="56.400" y="279" width="14.600" height="11.500" rx=".8"/>
  <path d="M61.300 288.300L63.700 281.600L66.100 288.300M62.100 286.200H65.300" stroke="#7b7d99" stroke-width="1"/>
 </g>
 <g transform="translate(0,26)" stroke="#5c5e7a" stroke-width="1" fill="none" stroke-linejoin="round">
  <path d="M56.300 288.500H54.500V277.200H68.700V278.800"/>
  <rect x="56.400" y="279" width="14.600" height="11.500" rx=".8"/>
  <path d="M61.300 288.300L63.700 281.600L66.100 288.300M62.100 286.200H65.300" stroke="#7b7d99" stroke-width="1"/>
 </g>
 <g transform="translate(0,52)" stroke="#5c5e7a" stroke-width="1" fill="none" stroke-linejoin="round">
  <path d="M56.300 288.500H54.500V277.200H68.700V278.800"/>
  <rect x="56.400" y="279" width="14.600" height="11.500" rx=".8"/>
  <path d="M61.300 288.300L63.700 281.600L66.100 288.300M62.100 286.200H65.300" stroke="#7b7d99" stroke-width="1"/>
 </g>
 <!-- sidebar plus -->
 <path d="M50.5 373.5H62M56.2 367.7V379.3" stroke="#4b4d6a" stroke-width="1"/>
 <path d="M55 355.5H69" stroke="#b4b7da" stroke-width="1"/>
</svg>
</body></html>
